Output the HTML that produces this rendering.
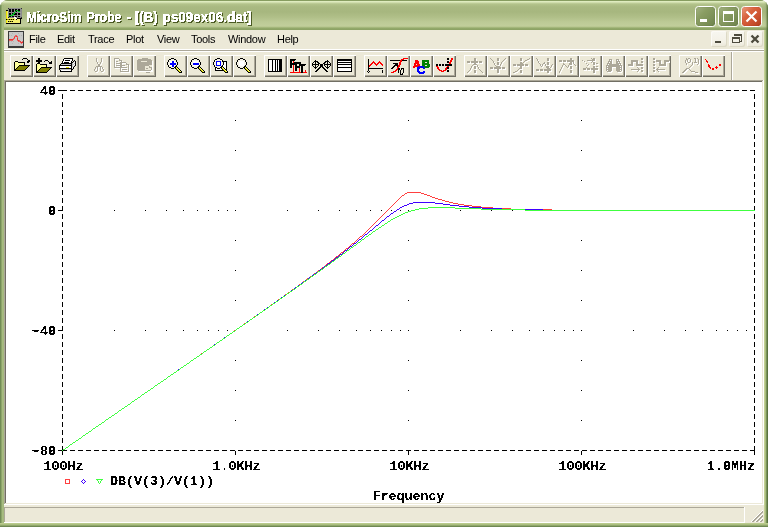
<!DOCTYPE html><html><head><meta charset="utf-8"><title>MicroSim Probe</title><style>
html,body{margin:0;padding:0;}
body{width:768px;height:527px;overflow:hidden;background:#fff;position:relative;font-family:"Liberation Sans",sans-serif;}
#win{position:absolute;left:0;top:0;width:768px;height:527px;border-radius:8px 8px 0 0;overflow:hidden;
 background:linear-gradient(to right,#728c56 0,#728c56 1px,#8da56a 1px,#8da56a 2px,#a6bb80 2px,#a6bb80 3px,#a5b87e 3px,#a5b87e 4px,#a4b880 4px,#a4b880 764px,#c6d398 764px,#c0ce92 765px,#b0c284 765px,#a5b97a 766px,#7f9860 766px,#728c55 767px,#5a7340 767px,#5a7340 768px);}
#title:before{content:"";position:absolute;left:0;top:0;width:3px;height:30px;background:linear-gradient(to right,rgba(90,120,60,.55) 0,rgba(90,120,60,.55) 1px,rgba(120,150,90,.2) 1px,rgba(120,150,90,0) 3px);}
#title:after{content:"";position:absolute;right:0;top:0;width:4px;height:30px;background:linear-gradient(to left,rgba(70,100,45,.75) 0,rgba(70,100,45,.75) 1px,rgba(90,120,60,.45) 1px,rgba(90,120,60,.45) 2px,rgba(110,140,80,.2) 2px,rgba(120,150,90,0) 4px);}
#lf{position:absolute;left:0;top:5px;width:4px;height:26px;background:linear-gradient(to right,#728c56 0,#728c56 1px,#8da56a 1px,#8da56a 2px,#a6bb80 2px,#a6bb80 3px,#a5b87e 3px,#a5b87e 4px);}
#bot{position:absolute;left:0;top:523px;width:768px;height:4px;background:linear-gradient(to bottom,#c0cf93 0,#b4c687 1px,#a2b777 2px,#7f9860 3px,#5f7845 4px);}
#title{position:absolute;left:0;top:0;width:768px;height:30px;
 background:linear-gradient(to bottom,#879d60 0,#879d60 1px,#e3efc4 1px,#dbe8ba 2px,#c5d3a0 3px,#b3c38b 4px,#a9b981 7px,#a7b77f 12px,#b0bf88 17px,#bccA96 22px,#c1ce9b 26px,#b3c38a 27px,#94aa6c 28px,#8aa163 30px);}
#ttext{position:absolute;left:26px;top:8px;font-weight:bold;font-size:13.2px;color:#fff;white-space:nowrap;text-shadow:1px 1px 0 #5f6f3c;letter-spacing:0px}
.cb{position:absolute;top:6px;width:19px;height:19px;border:1px solid #fff;border-radius:3.5px;background:linear-gradient(135deg,#a3b283 0,#8a9d63 35%,#7c9058 70%,#6d824b 100%);box-shadow:inset 0 0 1px 0 rgba(60,80,30,.6);}
.cb.x{background:linear-gradient(135deg,#eb9c80 0,#d9643f 35%,#cd5230 65%,#b03f1e 100%);box-shadow:inset 0 0 1px 0 rgba(120,30,10,.6);}
.mb{position:absolute;top:31px;width:16px;height:16px;border-radius:2px;background:linear-gradient(to bottom,#f7f6f0 0,#f3f1e6 70%,#e9e6d6 100%);box-shadow:inset -1px -1px 0 #dcd9c6,inset 1px 1px 0 #fbfaf6;}
#sep{position:absolute;left:731px;top:52px;width:1px;height:28px;background:#aca899;box-shadow:1px 0 0 #fff;}
#menubar{position:absolute;left:4px;top:30px;width:760px;height:19px;background:#ece9d8;}
.mi{position:absolute;top:33px;font-size:11px;color:#000;white-space:nowrap;line-height:13px;letter-spacing:-0.3px;will-change:transform;}
#tb{position:absolute;left:4px;top:49px;width:760px;height:33px;background:#ece9d8;box-shadow:inset 0 1px 0 #fff,inset 0 2px 0 #aca899,inset 0 3px 0 #fff;}
.btn{position:absolute;top:55px;width:23px;height:22px;background:#ece9d8;box-shadow:inset 1px 1px 0 #fff,inset -1px -1px 0 #716f64,inset -2px -2px 0 #aca899;}
#client{position:absolute;left:6px;top:82px;width:756px;height:421px;background:#fff;}
#status{position:absolute;left:4px;top:503px;width:760px;height:20px;background:#ece9d8;}
svg{position:absolute;left:0;top:0;}
.it{font-family:"Liberation Sans",sans-serif;font-weight:bold;stroke-width:0.5px;}
.t{font-family:"Liberation Mono",monospace;font-weight:bold;font-size:13.33px;fill:#000;stroke:#000;stroke-width:0.12px;}
</style></head><body>
<div id="win"><div id="title"></div><div id="lf"></div><div id="bot"></div></div>
<div id="menubar"></div>
<div class="mi" style="left:29px">File</div>
<div class="mi" style="left:57px">Edit</div>
<div class="mi" style="left:88px">Trace</div>
<div class="mi" style="left:126px">Plot</div>
<div class="mi" style="left:157px">View</div>
<div class="mi" style="left:191px">Tools</div>
<div class="mi" style="left:228px">Window</div>
<div class="mi" style="left:277px">Help</div>
<div id="tb"></div><div id="sep"></div>
<div class="cb" style="left:695px"></div><div class="cb" style="left:718px"></div><div class="cb x" style="left:741px"></div>
<div class="mb" style="left:711px"></div><div class="mb" style="left:729px"></div><div class="mb" style="left:747px"></div>
<svg width="768" height="527" viewBox="0 0 768 527" shape-rendering="crispEdges"><path d="M700 19h7v3h-7z" fill="#fff"/><path d="M723 11h11v11h-11zM724 14v7h9v-7z" fill="#fff" fill-rule="evenodd"/><path d="M746.5 11.5l10 10M756.5 11.5l-10 10" stroke="#fff" stroke-width="2.2" fill="none" shape-rendering="auto" stroke-linecap="butt"/><path d="M715 41h6v2h-6z" fill="#4d4b3e"/><path d="M734 34h8v8h-2v-1h1v-5h-7z" fill="#4d4b3e"/><path d="M732 37h8v6h-8zM733 39v3h6v-3z" fill="#4d4b3e" fill-rule="evenodd"/><path d="M751.5 35.5l7 7M758.5 35.5l-7 7" stroke="#4d4b3e" stroke-width="2.4" fill="none" shape-rendering="auto"/></svg>
<div class="btn" style="left:10px"></div>
<div class="btn" style="left:33px"></div>
<div class="btn" style="left:56px"></div>
<div class="btn" style="left:87px"></div>
<div class="btn" style="left:110px"></div>
<div class="btn" style="left:133px"></div>
<div class="btn" style="left:164px"></div>
<div class="btn" style="left:187px"></div>
<div class="btn" style="left:210px"></div>
<div class="btn" style="left:233px"></div>
<div class="btn" style="left:264px"></div>
<div class="btn" style="left:287px"></div>
<div class="btn" style="left:310px"></div>
<div class="btn" style="left:333px"></div>
<div class="btn" style="left:364px"></div>
<div class="btn" style="left:387px"></div>
<div class="btn" style="left:410px"></div>
<div class="btn" style="left:433px"></div>
<div class="btn" style="left:464px"></div>
<div class="btn" style="left:487px"></div>
<div class="btn" style="left:510px"></div>
<div class="btn" style="left:533px"></div>
<div class="btn" style="left:556px"></div>
<div class="btn" style="left:579px"></div>
<div class="btn" style="left:602px"></div>
<div class="btn" style="left:625px"></div>
<div class="btn" style="left:648px"></div>
<div class="btn" style="left:679px"></div>
<div class="btn" style="left:702px"></div>
<div id="client"></div><div id="status"></div>
<svg width="768" height="527" viewBox="0 0 768 527" shape-rendering="crispEdges"><rect x="4" y="80" width="760" height="1" fill="#aca899"/><rect x="5" y="81" width="758" height="1" fill="#716f64"/><rect x="4" y="80" width="1" height="424" fill="#aca899"/><rect x="5" y="81" width="1" height="422" fill="#716f64"/><rect x="762" y="81" width="1" height="423" fill="#ece9d8"/><rect x="763" y="80" width="1" height="425" fill="#fff"/><rect x="5" y="503" width="758" height="1" fill="#ece9d8"/><rect x="4" y="504" width="760" height="1" fill="#fff"/><rect x="4" y="507" width="740" height="1" fill="#aca899"/><rect x="4" y="507" width="1" height="15" fill="#aca899"/><rect x="744" y="507" width="1" height="16" fill="#fff"/><rect x="4" y="522" width="741" height="1" fill="#fff"/><path d="M762 510h1v1h-1zM761 511h1v1h-1zM760 512h1v1h-1zM759 513h1v1h-1zM758 514h1v1h-1zM757 515h1v1h-1zM756 516h1v1h-1zM755 517h1v1h-1zM754 518h1v1h-1zM753 519h1v1h-1zM752 520h1v1h-1zM751 521h1v1h-1zM762 514h1v1h-1zM761 515h1v1h-1zM760 516h1v1h-1zM759 517h1v1h-1zM758 518h1v1h-1zM757 519h1v1h-1zM756 520h1v1h-1zM755 521h1v1h-1zM762 518h1v1h-1zM761 519h1v1h-1zM760 520h1v1h-1zM759 521h1v1h-1z" fill="#fff"/><path d="M762 511h1v1h-1zM762 512h1v1h-1zM761 512h1v1h-1zM761 513h1v1h-1zM760 513h1v1h-1zM760 514h1v1h-1zM759 514h1v1h-1zM759 515h1v1h-1zM758 515h1v1h-1zM758 516h1v1h-1zM757 516h1v1h-1zM757 517h1v1h-1zM756 517h1v1h-1zM756 518h1v1h-1zM755 518h1v1h-1zM755 519h1v1h-1zM754 519h1v1h-1zM754 520h1v1h-1zM753 520h1v1h-1zM753 521h1v1h-1zM752 521h1v1h-1zM762 515h1v1h-1zM762 516h1v1h-1zM761 516h1v1h-1zM761 517h1v1h-1zM760 517h1v1h-1zM760 518h1v1h-1zM759 518h1v1h-1zM759 519h1v1h-1zM758 519h1v1h-1zM758 520h1v1h-1zM757 520h1v1h-1zM757 521h1v1h-1zM756 521h1v1h-1zM762 519h1v1h-1zM762 520h1v1h-1zM761 520h1v1h-1zM761 521h1v1h-1zM760 521h1v1h-1z" fill="#aca899"/></svg>
<svg width="768" height="527" viewBox="0 0 768 527" shape-rendering="crispEdges"><path d="M15 61H18V62H15zM14 62H15V63H14zM18 62H25V63H18zM14 63H15V64H14zM24 63H25V64H24zM14 64H15V65H14zM24 64H25V65H24zM14 65H15V66H14zM19 65H30V66H19zM14 66H15V67H14zM18 66H19V67H18zM28 66H29V67H28zM14 67H15V68H14zM17 67H18V68H17zM27 67H28V68H27zM14 68H15V69H14zM16 68H17V69H16zM26 68H27V69H26zM14 69H16V70H14zM25 69H26V70H25zM14 70H25V71H14z" fill="#000"/><path d="M15 62H18V63H15zM15 63H24V64H15zM15 64H24V65H15zM15 65H19V66H15zM15 66H18V67H15zM15 67H17V68H15zM15 68H16V69H15z" fill="#ffff9c"/><path d="M19 66H28V67H19zM18 67H27V68H18zM17 68H26V69H17zM16 69H25V70H16z" fill="#808000"/>
<path d="M22 59h1v1h-1zM23 58h1v1h-1zM23 58h1v1h-1zM24 58h1v1h-1zM25 58h1v1h-1zM26 58h1v1h-1zM26 58h1v1h-1zM27 59h1v1h-1zM28 60h1v1h-1zM28 60h1v1h-1zM28 61h1v1h-1zM28 62h1v1h-1zM27 61H30V62H27zM29 60h1v1h-1zM27 62h1v1h-1z" fill="#000"/>
<path d="M37 63H40V64H37zM36 64H37V65H36zM40 64H47V65H40zM36 65H37V66H36zM46 65H47V66H46zM36 66H37V67H36zM46 66H47V67H46zM36 67H37V68H36zM41 67H52V68H41zM36 68H37V69H36zM40 68H41V69H40zM50 68H51V69H50zM36 69H37V70H36zM39 69H40V70H39zM49 69H50V70H49zM36 70H37V71H36zM38 70H39V71H38zM48 70H49V71H48zM36 71H38V72H36zM47 71H48V72H47zM36 72H47V73H36z" fill="#000"/><path d="M37 64H40V65H37zM37 65H46V66H37zM37 66H46V67H37zM37 67H41V68H37zM37 68H40V69H37zM37 69H39V70H37zM37 70H38V71H37z" fill="#ffff9c"/><path d="M41 68H50V69H41zM40 69H49V70H40zM39 70H48V71H39zM38 71H47V72H38z" fill="#808000"/>
<path d="M36 60H42V62H36zM38 58H40V64H38z" fill="#000"/>
<path d="M44 61h1v1h-1zM45 60h1v1h-1zM45 60h1v1h-1zM46 60h1v1h-1zM47 60h1v1h-1zM47 60h1v1h-1zM48 61h1v1h-1zM49 62h1v1h-1zM49 62h1v1h-1zM50 63h1v1h-1zM49 63H52V64H49zM51 61h1v1h-1zM51 62h1v1h-1zM50 62h1v1h-1z" fill="#000"/>
<path d="M64 58H73V59H64zM63 59H64V60H63zM72 59H73V60H72zM63 60H64V61H63zM65 60H70V61H65zM72 60H73V61H72zM74 60H75V61H74zM62 61H63V62H62zM71 61H72V62H71zM73 61H74V62H73zM75 61H76V62H75zM62 62H63V63H62zM64 62H69V63H64zM71 62H73V63H71zM75 62H76V63H75zM61 63H72V64H61zM75 63H76V64H75zM60 64H61V65H60zM71 64H72V65H71zM75 64H76V65H75zM59 65H72V66H59zM75 65H76V66H75zM59 66H60V67H59zM71 66H72V67H71zM74 66H75V67H74zM59 67H60V68H59zM71 67H72V68H71zM73 67H74V68H73zM59 68H72V69H59zM73 68H74V69H73zM59 69H60V70H59zM71 69H73V70H71zM60 70H61V71H60zM71 70H72V71H71zM60 71H72V72H60z" fill="#000"/><path d="M64 59H72V60H64zM64 60H65V61H64zM70 60H72V61H70zM63 61H71V62H63zM63 62H64V63H63zM69 62H71V63H69zM74 62H75V63H74zM73 63H74V64H73zM74 64H75V65H74zM73 65H74V66H73zM60 66H71V67H60zM60 67H66V68H60zM69 67H71V68H69zM72 67H73V68H72zM61 70H71V71H61z" fill="#fff"/><path d="M74 61H75V62H74zM73 62H74V63H73zM72 63H73V64H72zM74 63H75V64H74zM61 64H71V65H61zM72 64H74V65H72zM72 65H73V66H72zM74 65H75V66H74zM72 66H74V67H72zM72 68H73V69H72zM60 69H71V70H60z" fill="#c0c0c0"/><path d="M66 67H69V68H66z" fill="#e8e000"/>
<path d="M96 58h1v1h-1zM96 59h1v1h-1zM96 60h1v1h-1zM96 61h1v1h-1zM96 61h1v1h-1zM97 62h1v1h-1zM97 63h1v1h-1zM98 64h1v1h-1zM98 64h1v1h-1zM98 65h1v1h-1zM98 66h1v1h-1zM101 58h1v1h-1zM101 59h1v1h-1zM101 60h1v1h-1zM101 61h1v1h-1zM101 61h1v1h-1zM100 62h1v1h-1zM100 63h1v1h-1zM99 64h1v1h-1zM99 64h1v1h-1zM99 65h1v1h-1zM99 66h1v1h-1zM97 66h1v1h-1zM96 66h1v1h-1zM95 67h1v1h-1zM95 67h1v1h-1zM95 68h1v1h-1zM94 69h1v1h-1zM94 69h1v1h-1zM94 70h1v1h-1zM95 71h1v1h-1zM95 71h1v1h-1zM96 71h1v1h-1zM97 70h1v1h-1zM97 70h1v1h-1zM97 69h1v1h-1zM97 68h1v1h-1zM97 67h1v1h-1zM100 66h1v1h-1zM101 66h1v1h-1zM102 67h1v1h-1zM102 67h1v1h-1zM102 68h1v1h-1zM103 69h1v1h-1zM103 69h1v1h-1zM103 70h1v1h-1zM102 71h1v1h-1zM102 71h1v1h-1zM101 71h1v1h-1zM100 70h1v1h-1zM100 70h1v1h-1zM100 69h1v1h-1zM100 68h1v1h-1zM100 67h1v1h-1z" fill="#fff" transform="translate(1 1)"/><path d="M96 58h1v1h-1zM96 59h1v1h-1zM96 60h1v1h-1zM96 61h1v1h-1zM96 61h1v1h-1zM97 62h1v1h-1zM97 63h1v1h-1zM98 64h1v1h-1zM98 64h1v1h-1zM98 65h1v1h-1zM98 66h1v1h-1zM101 58h1v1h-1zM101 59h1v1h-1zM101 60h1v1h-1zM101 61h1v1h-1zM101 61h1v1h-1zM100 62h1v1h-1zM100 63h1v1h-1zM99 64h1v1h-1zM99 64h1v1h-1zM99 65h1v1h-1zM99 66h1v1h-1zM97 66h1v1h-1zM96 66h1v1h-1zM95 67h1v1h-1zM95 67h1v1h-1zM95 68h1v1h-1zM94 69h1v1h-1zM94 69h1v1h-1zM94 70h1v1h-1zM95 71h1v1h-1zM95 71h1v1h-1zM96 71h1v1h-1zM97 70h1v1h-1zM97 70h1v1h-1zM97 69h1v1h-1zM97 68h1v1h-1zM97 67h1v1h-1zM100 66h1v1h-1zM101 66h1v1h-1zM102 67h1v1h-1zM102 67h1v1h-1zM102 68h1v1h-1zM103 69h1v1h-1zM103 69h1v1h-1zM103 70h1v1h-1zM102 71h1v1h-1zM102 71h1v1h-1zM101 71h1v1h-1zM100 70h1v1h-1zM100 70h1v1h-1zM100 69h1v1h-1zM100 68h1v1h-1zM100 67h1v1h-1z" fill="#aca899"/>
<path d="M114 58H119V59H114zM114 58H115V68H114zM114 67H122V68H114zM121 60H122V68H121zM119 59h1v1h-1zM120 60h1v1h-1zM119 60h1v1h-1zM116 61H118V62H116zM116 63H120V64H116zM116 65H120V66H116zM120 62H126V63H120zM120 62H121V72H120zM120 71H129V72H120zM128 64H129V72H128zM126 63h1v1h-1zM127 64h1v1h-1zM126 64h1v1h-1zM122 65H125V66H122zM122 67H127V68H122zM122 69H127V70H122z" fill="#fff" transform="translate(1 1)"/><path d="M114 58H119V59H114zM114 58H115V68H114zM114 67H122V68H114zM121 60H122V68H121zM119 59h1v1h-1zM120 60h1v1h-1zM119 60h1v1h-1zM116 61H118V62H116zM116 63H120V64H116zM116 65H120V66H116zM120 62H126V63H120zM120 62H121V72H120zM120 71H129V72H120zM128 64H129V72H128zM126 63h1v1h-1zM127 64h1v1h-1zM126 64h1v1h-1zM122 65H125V66H122zM122 67H127V68H122zM122 69H127V70H122z" fill="#aca899"/>
<path d="M137 60H152V70H137zM138 59H151V71H138zM142 58H148V59H142z" fill="#aca899"/><path d="M141 61H147V62H141z" fill="#ece9d8"/><path d="M144 65H152V71H144z" fill="#ece9d8"/><path d="M144 65H149V66H144zM144 65H145V71H144zM144 70H152V71H144zM151 67H152V71H151zM149 66h1v1h-1zM150 67h1v1h-1zM149 67h1v1h-1zM146 68H148V69H146zM146 70H150V71H146zM146 72H150V73H146z" fill="#aca899"/><path d="M152 61H153V71H152zM139 71H153V72H139zM151 70h1v1h-1z" fill="#fff"/>
<path d="M169 60H176V67H169zM171 59H174V68H171zM168 62H177V65H168z" fill="#f4f2e6"/><path d="M170 61H175V66H170z" fill="#fff"/><path d="M171 58h1v1h-1zM172 58h1v1h-1zM173 58h1v1h-1zM169 59h1v1h-1zM170 59h1v1h-1zM174 59h1v1h-1zM175 59h1v1h-1zM168 60h1v1h-1zM176 60h1v1h-1zM168 61h1v1h-1zM176 61h1v1h-1zM167 62h1v1h-1zM167 63h1v1h-1zM167 64h1v1h-1zM177 62h1v1h-1zM177 63h1v1h-1zM177 64h1v1h-1zM168 65h1v1h-1zM176 65h1v1h-1zM168 66h1v1h-1zM176 66h1v1h-1zM169 67h1v1h-1zM170 67h1v1h-1zM174 67h1v1h-1zM175 67h1v1h-1zM171 68h1v1h-1zM172 68h1v1h-1zM173 68h1v1h-1z" fill="#000"/><path d="M177 67h1v1h-1zM178 68h1v1h-1zM179 69h1v1h-1zM180 70h1v1h-1zM181 71h1v1h-1zM175 68h1v1h-1zM176 69h1v1h-1zM177 70h1v1h-1zM178 71h1v1h-1zM179 72h1v1h-1zM180 72h1v1h-1zM181 72h1v1h-1zM175 66h1v1h-1z" fill="#000"/><path d="M176 68h1v1h-1zM177 69h1v1h-1zM178 70h1v1h-1zM179 71h1v1h-1z" fill="#d0d000"/><path d="M176 67h1v1h-1zM177 68h1v1h-1zM178 69h1v1h-1zM179 70h1v1h-1zM180 71h1v1h-1z" fill="#ffff70"/>
<path d="M170 63H176V65H170zM172 61H174V67H172z" fill="#0000ff"/>
<path d="M192 60H199V67H192zM194 59H197V68H194zM191 62H200V65H191z" fill="#f4f2e6"/><path d="M193 61H198V66H193z" fill="#fff"/><path d="M194 58h1v1h-1zM195 58h1v1h-1zM196 58h1v1h-1zM192 59h1v1h-1zM193 59h1v1h-1zM197 59h1v1h-1zM198 59h1v1h-1zM191 60h1v1h-1zM199 60h1v1h-1zM191 61h1v1h-1zM199 61h1v1h-1zM190 62h1v1h-1zM190 63h1v1h-1zM190 64h1v1h-1zM200 62h1v1h-1zM200 63h1v1h-1zM200 64h1v1h-1zM191 65h1v1h-1zM199 65h1v1h-1zM191 66h1v1h-1zM199 66h1v1h-1zM192 67h1v1h-1zM193 67h1v1h-1zM197 67h1v1h-1zM198 67h1v1h-1zM194 68h1v1h-1zM195 68h1v1h-1zM196 68h1v1h-1z" fill="#000"/><path d="M200 67h1v1h-1zM201 68h1v1h-1zM202 69h1v1h-1zM203 70h1v1h-1zM204 71h1v1h-1zM198 68h1v1h-1zM199 69h1v1h-1zM200 70h1v1h-1zM201 71h1v1h-1zM202 72h1v1h-1zM203 72h1v1h-1zM204 72h1v1h-1zM198 66h1v1h-1z" fill="#000"/><path d="M199 68h1v1h-1zM200 69h1v1h-1zM201 70h1v1h-1zM202 71h1v1h-1z" fill="#d0d000"/><path d="M199 67h1v1h-1zM200 68h1v1h-1zM201 69h1v1h-1zM202 70h1v1h-1zM203 71h1v1h-1z" fill="#ffff70"/>
<path d="M193 63H199V65H193z" fill="#0000ff"/>
<path d="M222 61H227V62H222zM226 61H227V71H226zM215 70H227V71H215zM215 67H216V71H215z" fill="#000"/><path d="M216 67H226V70H216zM222 62H226V67H222z" fill="#fff"/>
<path d="M215 60H222V67H215zM217 59H220V68H217zM214 62H223V65H214z" fill="#f4f2e6"/><path d="M216 61H221V66H216z" fill="#fff"/><path d="M217 58h1v1h-1zM218 58h1v1h-1zM219 58h1v1h-1zM215 59h1v1h-1zM216 59h1v1h-1zM220 59h1v1h-1zM221 59h1v1h-1zM214 60h1v1h-1zM222 60h1v1h-1zM214 61h1v1h-1zM222 61h1v1h-1zM213 62h1v1h-1zM213 63h1v1h-1zM213 64h1v1h-1zM223 62h1v1h-1zM223 63h1v1h-1zM223 64h1v1h-1zM214 65h1v1h-1zM222 65h1v1h-1zM214 66h1v1h-1zM222 66h1v1h-1zM215 67h1v1h-1zM216 67h1v1h-1zM220 67h1v1h-1zM221 67h1v1h-1zM217 68h1v1h-1zM218 68h1v1h-1zM219 68h1v1h-1z" fill="#000"/><path d="M223 67h1v1h-1zM224 68h1v1h-1zM225 69h1v1h-1zM226 70h1v1h-1zM227 71h1v1h-1zM221 68h1v1h-1zM222 69h1v1h-1zM223 70h1v1h-1zM224 71h1v1h-1zM225 72h1v1h-1zM226 72h1v1h-1zM227 72h1v1h-1zM221 66h1v1h-1z" fill="#000"/><path d="M222 68h1v1h-1zM223 69h1v1h-1zM224 70h1v1h-1zM225 71h1v1h-1z" fill="#d0d000"/><path d="M222 67h1v1h-1zM223 68h1v1h-1zM224 69h1v1h-1zM225 70h1v1h-1zM226 71h1v1h-1z" fill="#ffff70"/>
<path d="M216 61H221V66H216z" fill="#0000ff"/><path d="M217 62H220V65H217z" fill="#fff"/>
<path d="M238 60H245V67H238zM240 59H243V68H240zM237 62H246V65H237z" fill="#f4f2e6"/><path d="M239 61H244V66H239z" fill="#fff"/><path d="M240 58h1v1h-1zM241 58h1v1h-1zM242 58h1v1h-1zM238 59h1v1h-1zM239 59h1v1h-1zM243 59h1v1h-1zM244 59h1v1h-1zM237 60h1v1h-1zM245 60h1v1h-1zM237 61h1v1h-1zM245 61h1v1h-1zM236 62h1v1h-1zM236 63h1v1h-1zM236 64h1v1h-1zM246 62h1v1h-1zM246 63h1v1h-1zM246 64h1v1h-1zM237 65h1v1h-1zM245 65h1v1h-1zM237 66h1v1h-1zM245 66h1v1h-1zM238 67h1v1h-1zM239 67h1v1h-1zM243 67h1v1h-1zM244 67h1v1h-1zM240 68h1v1h-1zM241 68h1v1h-1zM242 68h1v1h-1z" fill="#000"/><path d="M246 67h1v1h-1zM247 68h1v1h-1zM248 69h1v1h-1zM249 70h1v1h-1zM250 71h1v1h-1zM244 68h1v1h-1zM245 69h1v1h-1zM246 70h1v1h-1zM247 71h1v1h-1zM248 72h1v1h-1zM249 72h1v1h-1zM250 72h1v1h-1zM244 66h1v1h-1z" fill="#000"/><path d="M245 68h1v1h-1zM246 69h1v1h-1zM247 70h1v1h-1zM248 71h1v1h-1z" fill="#d0d000"/><path d="M245 67h1v1h-1zM246 68h1v1h-1zM247 69h1v1h-1zM248 70h1v1h-1zM249 71h1v1h-1z" fill="#ffff70"/>
<path d="M268 59H282V72H268z" fill="#000"/><path d="M269 60H272V71H269zM273 60H275V71H273zM276 60H277V71H276zM278 60H279V71H278z" fill="#fff"/>
<path d="M290 72H307V73H290zM293 61H294V73H293zM299 68H300V73H299zM305 70H306V73H305z" fill="#ff0000"/>
<path d="M312 63h1v1h-1zM312 64h1v1h-1zM312 65h1v1h-1zM313 62h1v1h-1zM313 64h1v1h-1zM313 66h1v1h-1zM314 61h1v1h-1zM314 64h1v1h-1zM314 67h1v1h-1zM315 60h1v1h-1zM315 61h1v1h-1zM315 62h1v1h-1zM315 63h1v1h-1zM315 64h1v1h-1zM315 65h1v1h-1zM315 66h1v1h-1zM315 67h1v1h-1zM315 68h1v1h-1zM315 71h1v1h-1zM316 61h1v1h-1zM316 64h1v1h-1zM316 67h1v1h-1zM316 70h1v1h-1zM316 71h1v1h-1zM317 61h1v1h-1zM317 62h1v1h-1zM317 64h1v1h-1zM317 66h1v1h-1zM317 69h1v1h-1zM317 70h1v1h-1zM318 62h1v1h-1zM318 63h1v1h-1zM318 64h1v1h-1zM318 65h1v1h-1zM318 68h1v1h-1zM318 69h1v1h-1zM319 63h1v1h-1zM319 67h1v1h-1zM319 68h1v1h-1zM320 64h1v1h-1zM320 65h1v1h-1zM320 66h1v1h-1zM320 67h1v1h-1zM321 64h1v1h-1zM321 65h1v1h-1zM321 66h1v1h-1zM322 64h1v1h-1zM322 65h1v1h-1zM322 66h1v1h-1zM322 67h1v1h-1zM323 63h1v1h-1zM323 67h1v1h-1zM323 68h1v1h-1zM324 62h1v1h-1zM324 63h1v1h-1zM324 64h1v1h-1zM324 65h1v1h-1zM324 68h1v1h-1zM324 69h1v1h-1zM325 61h1v1h-1zM325 62h1v1h-1zM325 64h1v1h-1zM325 66h1v1h-1zM325 69h1v1h-1zM325 70h1v1h-1zM326 61h1v1h-1zM326 64h1v1h-1zM326 67h1v1h-1zM326 70h1v1h-1zM326 71h1v1h-1zM327 60h1v1h-1zM327 61h1v1h-1zM327 62h1v1h-1zM327 63h1v1h-1zM327 64h1v1h-1zM327 65h1v1h-1zM327 66h1v1h-1zM327 67h1v1h-1zM327 68h1v1h-1zM327 71h1v1h-1zM328 61h1v1h-1zM328 64h1v1h-1zM328 67h1v1h-1zM329 62h1v1h-1zM329 64h1v1h-1zM329 66h1v1h-1zM330 63h1v1h-1zM330 64h1v1h-1zM330 65h1v1h-1z" fill="#000"/>
<path d="M337 59H352V72H337z" fill="#000"/><path d="M338 61H351V62H338zM338 63H351V64H338zM338 65H351V67H338zM338 68H351V71H338z" fill="#fff"/>
<path d="M368 59H369V70H368zM368 68H383V69H368zM382 70H383V73H382zM368 70h1v1h-1zM367 71h1v1h-1zM369 71h1v1h-1zM368 72h1v1h-1z" fill="#000"/>
<path d="M369 65h1v1h-1zM369 66h1v1h-1zM370 64h1v1h-1zM370 65h1v1h-1zM371 63h1v1h-1zM371 64h1v1h-1zM372 62h1v1h-1zM372 63h1v1h-1zM373 61h1v1h-1zM373 62h1v1h-1zM374 62h1v1h-1zM374 63h1v1h-1zM375 63h1v1h-1zM375 64h1v1h-1zM376 64h1v1h-1zM376 65h1v1h-1zM377 63h1v1h-1zM377 64h1v1h-1zM378 62h1v1h-1zM378 63h1v1h-1zM379 61h1v1h-1zM379 62h1v1h-1zM380 62h1v1h-1zM380 63h1v1h-1zM381 63h1v1h-1zM381 64h1v1h-1zM382 64h1v1h-1zM382 65h1v1h-1z" fill="#ff0000"/>
<path d="M390 60H407V61H390z" fill="#000"/>
<path d="M391 68h1v1h-1zM392 67h1v1h-1zM392 68h1v1h-1zM393 63h1v1h-1zM393 66h1v1h-1zM393 67h1v1h-1zM394 63h1v1h-1zM394 65h1v1h-1zM394 66h1v1h-1zM395 63h1v1h-1zM395 64h1v1h-1zM395 65h1v1h-1zM396 63h1v1h-1zM396 64h1v1h-1zM396 65h1v1h-1zM397 63h1v1h-1zM397 64h1v1h-1zM397 65h1v1h-1zM397 66h1v1h-1zM397 67h1v1h-1z" fill="#000"/>
<path d="M391 72h1v1h-1zM392 72h1v1h-1zM393 71h1v1h-1zM393 72h1v1h-1zM394 71h1v1h-1zM395 70h1v1h-1zM395 71h1v1h-1zM396 69h1v1h-1zM396 70h1v1h-1zM397 67h1v1h-1zM397 68h1v1h-1zM397 69h1v1h-1zM398 65h1v1h-1zM398 66h1v1h-1zM398 67h1v1h-1zM398 68h1v1h-1zM399 62h1v1h-1zM399 63h1v1h-1zM399 64h1v1h-1zM399 65h1v1h-1zM399 66h1v1h-1zM400 60h1v1h-1zM400 61h1v1h-1zM400 62h1v1h-1zM400 63h1v1h-1zM400 64h1v1h-1zM401 59h1v1h-1zM401 60h1v1h-1zM401 61h1v1h-1zM402 59h1v1h-1zM403 58h1v1h-1zM403 59h1v1h-1zM404 58h1v1h-1zM405 58h1v1h-1zM406 58h1v1h-1zM407 58h1v1h-1z" fill="#ff0000"/>
<path d="M436 66h1v1h-1zM437 67h1v1h-1zM437 68h1v1h-1zM438 69h1v1h-1zM438 69h1v1h-1zM439 70h1v1h-1zM440 70h1v1h-1zM441 71h1v1h-1zM441 71h1v1h-1zM442 71h1v1h-1zM443 70h1v1h-1zM444 70h1v1h-1zM444 70h1v1h-1zM445 69h1v1h-1zM445 68h1v1h-1zM446 67h1v1h-1zM447 66h1v1h-1zM447 66h1v1h-1zM448 65h1v1h-1zM448 64h1v1h-1zM449 63h1v1h-1zM449 62h1v1h-1zM450 61h1v1h-1zM450 61h1v1h-1zM450 60h1v1h-1zM451 59h1v1h-1zM451 58h1v1h-1zM437 66h1v1h-1zM438 67h1v1h-1zM438 68h1v1h-1zM439 69h1v1h-1zM439 69h1v1h-1zM440 70h1v1h-1zM441 70h1v1h-1zM442 71h1v1h-1zM442 71h1v1h-1zM443 71h1v1h-1zM444 70h1v1h-1zM445 70h1v1h-1zM445 70h1v1h-1zM446 69h1v1h-1zM446 68h1v1h-1zM447 67h1v1h-1zM448 66h1v1h-1zM448 66h1v1h-1zM449 65h1v1h-1zM449 64h1v1h-1zM450 63h1v1h-1zM450 62h1v1h-1zM451 61h1v1h-1zM451 61h1v1h-1zM451 60h1v1h-1zM452 59h1v1h-1zM452 58h1v1h-1z" fill="#ff0000"/>
<path d="M436 64h1v1h-1zM436 65h1v1h-1zM437 64h1v1h-1zM437 65h1v1h-1zM439 64h1v1h-1zM439 65h1v1h-1zM440 64h1v1h-1zM440 65h1v1h-1zM442 64h1v1h-1zM442 65h1v1h-1zM443 64h1v1h-1zM443 65h1v1h-1zM445 64h1v1h-1zM445 65h1v1h-1zM446 64h1v1h-1zM446 65h1v1h-1zM448 64h1v1h-1zM448 65h1v1h-1zM449 64h1v1h-1zM449 65h1v1h-1zM451 64h1v1h-1zM451 65h1v1h-1zM447 58h1v1h-1zM448 58h1v1h-1zM447 59h1v1h-1zM448 59h1v1h-1zM447 61h1v1h-1zM448 61h1v1h-1zM447 62h1v1h-1zM448 62h1v1h-1zM447 64h1v1h-1zM448 64h1v1h-1zM447 65h1v1h-1zM448 65h1v1h-1zM447 67h1v1h-1zM448 67h1v1h-1zM447 68h1v1h-1zM448 68h1v1h-1zM447 70h1v1h-1zM448 70h1v1h-1zM447 71h1v1h-1zM448 71h1v1h-1zM445 64h1v1h-1zM445 65h1v1h-1zM446 64h1v1h-1zM446 65h1v1h-1zM447 64h1v1h-1zM447 65h1v1h-1zM448 64h1v1h-1zM448 65h1v1h-1zM449 64h1v1h-1zM449 65h1v1h-1zM450 64h1v1h-1zM450 65h1v1h-1z" fill="#000"/>
<path d="M467 72h1v1h-1zM468 71h1v1h-1zM469 70h1v1h-1zM470 69h1v1h-1zM470 69h1v1h-1zM470 68h1v1h-1zM471 67h1v1h-1zM471 66h1v1h-1zM472 65h1v1h-1zM472 65h1v1h-1zM473 64h1v1h-1zM474 63h1v1h-1zM474 63h1v1h-1zM475 63h1v1h-1zM475 63h1v1h-1zM476 64h1v1h-1zM477 65h1v1h-1zM477 65h1v1h-1zM477 66h1v1h-1zM478 67h1v1h-1zM478 68h1v1h-1zM479 69h1v1h-1zM479 69h1v1h-1zM480 70h1v1h-1zM481 71h1v1h-1zM482 72h1v1h-1zM467 61h1v1h-1zM467 62h1v1h-1zM468 61h1v1h-1zM468 62h1v1h-1zM469 61h1v1h-1zM469 62h1v1h-1zM471 61h1v1h-1zM471 62h1v1h-1zM472 61h1v1h-1zM472 62h1v1h-1zM473 61h1v1h-1zM473 62h1v1h-1zM474 58h1v1h-1zM474 59h1v1h-1zM474 60h1v1h-1zM474 61h1v1h-1zM474 62h1v1h-1zM474 63h1v1h-1zM474 64h1v1h-1zM474 66h1v1h-1zM474 67h1v1h-1zM474 68h1v1h-1zM474 70h1v1h-1zM474 71h1v1h-1zM474 72h1v1h-1zM475 58h1v1h-1zM475 59h1v1h-1zM475 60h1v1h-1zM475 61h1v1h-1zM475 62h1v1h-1zM475 63h1v1h-1zM475 64h1v1h-1zM475 66h1v1h-1zM475 67h1v1h-1zM475 68h1v1h-1zM475 70h1v1h-1zM475 71h1v1h-1zM475 72h1v1h-1zM476 61h1v1h-1zM476 62h1v1h-1zM477 61h1v1h-1zM477 62h1v1h-1zM479 61h1v1h-1zM479 62h1v1h-1zM480 61h1v1h-1zM480 62h1v1h-1zM481 61h1v1h-1zM481 62h1v1h-1z" fill="#fff" transform="translate(1 1)"/><path d="M467 72h1v1h-1zM468 71h1v1h-1zM469 70h1v1h-1zM470 69h1v1h-1zM470 69h1v1h-1zM470 68h1v1h-1zM471 67h1v1h-1zM471 66h1v1h-1zM472 65h1v1h-1zM472 65h1v1h-1zM473 64h1v1h-1zM474 63h1v1h-1zM474 63h1v1h-1zM475 63h1v1h-1zM475 63h1v1h-1zM476 64h1v1h-1zM477 65h1v1h-1zM477 65h1v1h-1zM477 66h1v1h-1zM478 67h1v1h-1zM478 68h1v1h-1zM479 69h1v1h-1zM479 69h1v1h-1zM480 70h1v1h-1zM481 71h1v1h-1zM482 72h1v1h-1zM467 61h1v1h-1zM467 62h1v1h-1zM468 61h1v1h-1zM468 62h1v1h-1zM469 61h1v1h-1zM469 62h1v1h-1zM471 61h1v1h-1zM471 62h1v1h-1zM472 61h1v1h-1zM472 62h1v1h-1zM473 61h1v1h-1zM473 62h1v1h-1zM474 58h1v1h-1zM474 59h1v1h-1zM474 60h1v1h-1zM474 61h1v1h-1zM474 62h1v1h-1zM474 63h1v1h-1zM474 64h1v1h-1zM474 66h1v1h-1zM474 67h1v1h-1zM474 68h1v1h-1zM474 70h1v1h-1zM474 71h1v1h-1zM474 72h1v1h-1zM475 58h1v1h-1zM475 59h1v1h-1zM475 60h1v1h-1zM475 61h1v1h-1zM475 62h1v1h-1zM475 63h1v1h-1zM475 64h1v1h-1zM475 66h1v1h-1zM475 67h1v1h-1zM475 68h1v1h-1zM475 70h1v1h-1zM475 71h1v1h-1zM475 72h1v1h-1zM476 61h1v1h-1zM476 62h1v1h-1zM477 61h1v1h-1zM477 62h1v1h-1zM479 61h1v1h-1zM479 62h1v1h-1zM480 61h1v1h-1zM480 62h1v1h-1zM481 61h1v1h-1zM481 62h1v1h-1z" fill="#aca899"/>
<path d="M490 58h1v1h-1zM491 59h1v1h-1zM492 60h1v1h-1zM493 61h1v1h-1zM493 61h1v1h-1zM493 62h1v1h-1zM494 63h1v1h-1zM494 64h1v1h-1zM495 65h1v1h-1zM495 65h1v1h-1zM496 66h1v1h-1zM497 67h1v1h-1zM497 67h1v1h-1zM498 67h1v1h-1zM498 67h1v1h-1zM499 66h1v1h-1zM500 65h1v1h-1zM500 65h1v1h-1zM500 64h1v1h-1zM501 63h1v1h-1zM501 62h1v1h-1zM502 61h1v1h-1zM502 61h1v1h-1zM503 60h1v1h-1zM504 59h1v1h-1zM505 58h1v1h-1zM490 67h1v1h-1zM490 68h1v1h-1zM491 67h1v1h-1zM491 68h1v1h-1zM492 67h1v1h-1zM492 68h1v1h-1zM494 67h1v1h-1zM494 68h1v1h-1zM495 67h1v1h-1zM495 68h1v1h-1zM496 67h1v1h-1zM496 68h1v1h-1zM497 58h1v1h-1zM497 59h1v1h-1zM497 60h1v1h-1zM497 62h1v1h-1zM497 63h1v1h-1zM497 64h1v1h-1zM497 66h1v1h-1zM497 67h1v1h-1zM497 68h1v1h-1zM497 69h1v1h-1zM497 70h1v1h-1zM497 71h1v1h-1zM497 72h1v1h-1zM498 58h1v1h-1zM498 59h1v1h-1zM498 60h1v1h-1zM498 62h1v1h-1zM498 63h1v1h-1zM498 64h1v1h-1zM498 66h1v1h-1zM498 67h1v1h-1zM498 68h1v1h-1zM498 69h1v1h-1zM498 70h1v1h-1zM498 71h1v1h-1zM498 72h1v1h-1zM499 67h1v1h-1zM499 68h1v1h-1zM500 67h1v1h-1zM500 68h1v1h-1zM502 67h1v1h-1zM502 68h1v1h-1zM503 67h1v1h-1zM503 68h1v1h-1zM504 67h1v1h-1zM504 68h1v1h-1z" fill="#fff" transform="translate(1 1)"/><path d="M490 58h1v1h-1zM491 59h1v1h-1zM492 60h1v1h-1zM493 61h1v1h-1zM493 61h1v1h-1zM493 62h1v1h-1zM494 63h1v1h-1zM494 64h1v1h-1zM495 65h1v1h-1zM495 65h1v1h-1zM496 66h1v1h-1zM497 67h1v1h-1zM497 67h1v1h-1zM498 67h1v1h-1zM498 67h1v1h-1zM499 66h1v1h-1zM500 65h1v1h-1zM500 65h1v1h-1zM500 64h1v1h-1zM501 63h1v1h-1zM501 62h1v1h-1zM502 61h1v1h-1zM502 61h1v1h-1zM503 60h1v1h-1zM504 59h1v1h-1zM505 58h1v1h-1zM490 67h1v1h-1zM490 68h1v1h-1zM491 67h1v1h-1zM491 68h1v1h-1zM492 67h1v1h-1zM492 68h1v1h-1zM494 67h1v1h-1zM494 68h1v1h-1zM495 67h1v1h-1zM495 68h1v1h-1zM496 67h1v1h-1zM496 68h1v1h-1zM497 58h1v1h-1zM497 59h1v1h-1zM497 60h1v1h-1zM497 62h1v1h-1zM497 63h1v1h-1zM497 64h1v1h-1zM497 66h1v1h-1zM497 67h1v1h-1zM497 68h1v1h-1zM497 69h1v1h-1zM497 70h1v1h-1zM497 71h1v1h-1zM497 72h1v1h-1zM498 58h1v1h-1zM498 59h1v1h-1zM498 60h1v1h-1zM498 62h1v1h-1zM498 63h1v1h-1zM498 64h1v1h-1zM498 66h1v1h-1zM498 67h1v1h-1zM498 68h1v1h-1zM498 69h1v1h-1zM498 70h1v1h-1zM498 71h1v1h-1zM498 72h1v1h-1zM499 67h1v1h-1zM499 68h1v1h-1zM500 67h1v1h-1zM500 68h1v1h-1zM502 67h1v1h-1zM502 68h1v1h-1zM503 67h1v1h-1zM503 68h1v1h-1zM504 67h1v1h-1zM504 68h1v1h-1z" fill="#aca899"/>
<path d="M513 72h1v1h-1zM514 72h1v1h-1zM515 71h1v1h-1zM516 71h1v1h-1zM517 70h1v1h-1zM517 70h1v1h-1zM518 69h1v1h-1zM519 68h1v1h-1zM520 67h1v1h-1zM520 67h1v1h-1zM520 66h1v1h-1zM521 65h1v1h-1zM521 64h1v1h-1zM522 63h1v1h-1zM522 63h1v1h-1zM523 62h1v1h-1zM524 61h1v1h-1zM525 60h1v1h-1zM525 60h1v1h-1zM526 60h1v1h-1zM527 59h1v1h-1zM528 59h1v1h-1zM529 58h1v1h-1zM513 64h1v1h-1zM513 65h1v1h-1zM514 64h1v1h-1zM514 65h1v1h-1zM515 64h1v1h-1zM515 65h1v1h-1zM517 64h1v1h-1zM517 65h1v1h-1zM518 64h1v1h-1zM518 65h1v1h-1zM519 64h1v1h-1zM519 65h1v1h-1zM520 58h1v1h-1zM520 59h1v1h-1zM520 60h1v1h-1zM520 62h1v1h-1zM520 63h1v1h-1zM520 64h1v1h-1zM520 65h1v1h-1zM520 66h1v1h-1zM520 67h1v1h-1zM520 68h1v1h-1zM520 70h1v1h-1zM520 71h1v1h-1zM520 72h1v1h-1zM521 58h1v1h-1zM521 59h1v1h-1zM521 60h1v1h-1zM521 62h1v1h-1zM521 63h1v1h-1zM521 64h1v1h-1zM521 65h1v1h-1zM521 66h1v1h-1zM521 67h1v1h-1zM521 68h1v1h-1zM521 70h1v1h-1zM521 71h1v1h-1zM521 72h1v1h-1zM522 64h1v1h-1zM522 65h1v1h-1zM523 64h1v1h-1zM523 65h1v1h-1zM525 64h1v1h-1zM525 65h1v1h-1zM526 64h1v1h-1zM526 65h1v1h-1zM527 64h1v1h-1zM527 65h1v1h-1z" fill="#fff" transform="translate(1 1)"/><path d="M513 72h1v1h-1zM514 72h1v1h-1zM515 71h1v1h-1zM516 71h1v1h-1zM517 70h1v1h-1zM517 70h1v1h-1zM518 69h1v1h-1zM519 68h1v1h-1zM520 67h1v1h-1zM520 67h1v1h-1zM520 66h1v1h-1zM521 65h1v1h-1zM521 64h1v1h-1zM522 63h1v1h-1zM522 63h1v1h-1zM523 62h1v1h-1zM524 61h1v1h-1zM525 60h1v1h-1zM525 60h1v1h-1zM526 60h1v1h-1zM527 59h1v1h-1zM528 59h1v1h-1zM529 58h1v1h-1zM513 64h1v1h-1zM513 65h1v1h-1zM514 64h1v1h-1zM514 65h1v1h-1zM515 64h1v1h-1zM515 65h1v1h-1zM517 64h1v1h-1zM517 65h1v1h-1zM518 64h1v1h-1zM518 65h1v1h-1zM519 64h1v1h-1zM519 65h1v1h-1zM520 58h1v1h-1zM520 59h1v1h-1zM520 60h1v1h-1zM520 62h1v1h-1zM520 63h1v1h-1zM520 64h1v1h-1zM520 65h1v1h-1zM520 66h1v1h-1zM520 67h1v1h-1zM520 68h1v1h-1zM520 70h1v1h-1zM520 71h1v1h-1zM520 72h1v1h-1zM521 58h1v1h-1zM521 59h1v1h-1zM521 60h1v1h-1zM521 62h1v1h-1zM521 63h1v1h-1zM521 64h1v1h-1zM521 65h1v1h-1zM521 66h1v1h-1zM521 67h1v1h-1zM521 68h1v1h-1zM521 70h1v1h-1zM521 71h1v1h-1zM521 72h1v1h-1zM522 64h1v1h-1zM522 65h1v1h-1zM523 64h1v1h-1zM523 65h1v1h-1zM525 64h1v1h-1zM525 65h1v1h-1zM526 64h1v1h-1zM526 65h1v1h-1zM527 64h1v1h-1zM527 65h1v1h-1z" fill="#aca899"/>
<path d="M536 58h1v1h-1zM537 59h1v1h-1zM537 60h1v1h-1zM538 61h1v1h-1zM538 62h1v1h-1zM539 63h1v1h-1zM540 64h1v1h-1zM540 65h1v1h-1zM541 66h1v1h-1zM541 66h1v1h-1zM542 65h1v1h-1zM542 64h1v1h-1zM543 63h1v1h-1zM544 62h1v1h-1zM544 62h1v1h-1zM544 63h1v1h-1zM545 64h1v1h-1zM545 65h1v1h-1zM546 66h1v1h-1zM546 67h1v1h-1zM547 68h1v1h-1zM547 69h1v1h-1zM548 70h1v1h-1zM548 70h1v1h-1zM549 69h1v1h-1zM549 68h1v1h-1zM550 67h1v1h-1zM551 66h1v1h-1zM551 65h1v1h-1zM552 64h1v1h-1zM536 69h1v1h-1zM536 70h1v1h-1zM537 69h1v1h-1zM537 70h1v1h-1zM538 69h1v1h-1zM538 70h1v1h-1zM540 69h1v1h-1zM540 70h1v1h-1zM541 69h1v1h-1zM541 70h1v1h-1zM542 69h1v1h-1zM542 70h1v1h-1zM544 69h1v1h-1zM544 70h1v1h-1zM545 69h1v1h-1zM545 70h1v1h-1zM546 69h1v1h-1zM546 70h1v1h-1zM547 58h1v1h-1zM547 59h1v1h-1zM547 60h1v1h-1zM547 62h1v1h-1zM547 63h1v1h-1zM547 64h1v1h-1zM547 66h1v1h-1zM547 67h1v1h-1zM547 68h1v1h-1zM547 69h1v1h-1zM547 70h1v1h-1zM547 71h1v1h-1zM547 72h1v1h-1zM548 58h1v1h-1zM548 59h1v1h-1zM548 60h1v1h-1zM548 62h1v1h-1zM548 63h1v1h-1zM548 64h1v1h-1zM548 66h1v1h-1zM548 67h1v1h-1zM548 68h1v1h-1zM548 69h1v1h-1zM548 70h1v1h-1zM548 71h1v1h-1zM548 72h1v1h-1zM549 69h1v1h-1zM549 70h1v1h-1zM550 69h1v1h-1zM550 70h1v1h-1z" fill="#fff" transform="translate(1 1)"/><path d="M536 58h1v1h-1zM537 59h1v1h-1zM537 60h1v1h-1zM538 61h1v1h-1zM538 62h1v1h-1zM539 63h1v1h-1zM540 64h1v1h-1zM540 65h1v1h-1zM541 66h1v1h-1zM541 66h1v1h-1zM542 65h1v1h-1zM542 64h1v1h-1zM543 63h1v1h-1zM544 62h1v1h-1zM544 62h1v1h-1zM544 63h1v1h-1zM545 64h1v1h-1zM545 65h1v1h-1zM546 66h1v1h-1zM546 67h1v1h-1zM547 68h1v1h-1zM547 69h1v1h-1zM548 70h1v1h-1zM548 70h1v1h-1zM549 69h1v1h-1zM549 68h1v1h-1zM550 67h1v1h-1zM551 66h1v1h-1zM551 65h1v1h-1zM552 64h1v1h-1zM536 69h1v1h-1zM536 70h1v1h-1zM537 69h1v1h-1zM537 70h1v1h-1zM538 69h1v1h-1zM538 70h1v1h-1zM540 69h1v1h-1zM540 70h1v1h-1zM541 69h1v1h-1zM541 70h1v1h-1zM542 69h1v1h-1zM542 70h1v1h-1zM544 69h1v1h-1zM544 70h1v1h-1zM545 69h1v1h-1zM545 70h1v1h-1zM546 69h1v1h-1zM546 70h1v1h-1zM547 58h1v1h-1zM547 59h1v1h-1zM547 60h1v1h-1zM547 62h1v1h-1zM547 63h1v1h-1zM547 64h1v1h-1zM547 66h1v1h-1zM547 67h1v1h-1zM547 68h1v1h-1zM547 69h1v1h-1zM547 70h1v1h-1zM547 71h1v1h-1zM547 72h1v1h-1zM548 58h1v1h-1zM548 59h1v1h-1zM548 60h1v1h-1zM548 62h1v1h-1zM548 63h1v1h-1zM548 64h1v1h-1zM548 66h1v1h-1zM548 67h1v1h-1zM548 68h1v1h-1zM548 69h1v1h-1zM548 70h1v1h-1zM548 71h1v1h-1zM548 72h1v1h-1zM549 69h1v1h-1zM549 70h1v1h-1zM550 69h1v1h-1zM550 70h1v1h-1z" fill="#aca899"/>
<path d="M559 72h1v1h-1zM559 71h1v1h-1zM560 70h1v1h-1zM560 69h1v1h-1zM561 68h1v1h-1zM561 67h1v1h-1zM562 66h1v1h-1zM562 65h1v1h-1zM563 64h1v1h-1zM563 63h1v1h-1zM563 63h1v1h-1zM564 64h1v1h-1zM565 65h1v1h-1zM566 66h1v1h-1zM567 67h1v1h-1zM567 67h1v1h-1zM568 66h1v1h-1zM568 65h1v1h-1zM569 64h1v1h-1zM569 63h1v1h-1zM570 62h1v1h-1zM570 61h1v1h-1zM571 60h1v1h-1zM571 60h1v1h-1zM572 61h1v1h-1zM573 62h1v1h-1zM573 63h1v1h-1zM574 64h1v1h-1zM575 65h1v1h-1zM559 60h1v1h-1zM559 61h1v1h-1zM560 60h1v1h-1zM560 61h1v1h-1zM561 60h1v1h-1zM561 61h1v1h-1zM563 60h1v1h-1zM563 61h1v1h-1zM564 60h1v1h-1zM564 61h1v1h-1zM565 60h1v1h-1zM565 61h1v1h-1zM567 60h1v1h-1zM567 61h1v1h-1zM568 60h1v1h-1zM568 61h1v1h-1zM569 60h1v1h-1zM569 61h1v1h-1zM570 58h1v1h-1zM570 59h1v1h-1zM570 60h1v1h-1zM570 61h1v1h-1zM570 62h1v1h-1zM570 63h1v1h-1zM570 64h1v1h-1zM570 66h1v1h-1zM570 67h1v1h-1zM570 68h1v1h-1zM570 70h1v1h-1zM570 71h1v1h-1zM570 72h1v1h-1zM571 58h1v1h-1zM571 59h1v1h-1zM571 60h1v1h-1zM571 61h1v1h-1zM571 62h1v1h-1zM571 63h1v1h-1zM571 64h1v1h-1zM571 66h1v1h-1zM571 67h1v1h-1zM571 68h1v1h-1zM571 70h1v1h-1zM571 71h1v1h-1zM571 72h1v1h-1zM572 60h1v1h-1zM572 61h1v1h-1zM573 60h1v1h-1zM573 61h1v1h-1z" fill="#fff" transform="translate(1 1)"/><path d="M559 72h1v1h-1zM559 71h1v1h-1zM560 70h1v1h-1zM560 69h1v1h-1zM561 68h1v1h-1zM561 67h1v1h-1zM562 66h1v1h-1zM562 65h1v1h-1zM563 64h1v1h-1zM563 63h1v1h-1zM563 63h1v1h-1zM564 64h1v1h-1zM565 65h1v1h-1zM566 66h1v1h-1zM567 67h1v1h-1zM567 67h1v1h-1zM568 66h1v1h-1zM568 65h1v1h-1zM569 64h1v1h-1zM569 63h1v1h-1zM570 62h1v1h-1zM570 61h1v1h-1zM571 60h1v1h-1zM571 60h1v1h-1zM572 61h1v1h-1zM573 62h1v1h-1zM573 63h1v1h-1zM574 64h1v1h-1zM575 65h1v1h-1zM559 60h1v1h-1zM559 61h1v1h-1zM560 60h1v1h-1zM560 61h1v1h-1zM561 60h1v1h-1zM561 61h1v1h-1zM563 60h1v1h-1zM563 61h1v1h-1zM564 60h1v1h-1zM564 61h1v1h-1zM565 60h1v1h-1zM565 61h1v1h-1zM567 60h1v1h-1zM567 61h1v1h-1zM568 60h1v1h-1zM568 61h1v1h-1zM569 60h1v1h-1zM569 61h1v1h-1zM570 58h1v1h-1zM570 59h1v1h-1zM570 60h1v1h-1zM570 61h1v1h-1zM570 62h1v1h-1zM570 63h1v1h-1zM570 64h1v1h-1zM570 66h1v1h-1zM570 67h1v1h-1zM570 68h1v1h-1zM570 70h1v1h-1zM570 71h1v1h-1zM570 72h1v1h-1zM571 58h1v1h-1zM571 59h1v1h-1zM571 60h1v1h-1zM571 61h1v1h-1zM571 62h1v1h-1zM571 63h1v1h-1zM571 64h1v1h-1zM571 66h1v1h-1zM571 67h1v1h-1zM571 68h1v1h-1zM571 70h1v1h-1zM571 71h1v1h-1zM571 72h1v1h-1zM572 60h1v1h-1zM572 61h1v1h-1zM573 60h1v1h-1zM573 61h1v1h-1z" fill="#aca899"/>
<path d="M582 60h1v1h-1zM584 61h1v1h-1zM586 63h1v1h-1zM588 64h1v1h-1zM587 65h1v1h-1zM586 67h1v1h-1zM584 69h1v1h-1zM587 60h1v1h-1zM588 60h1v1h-1zM589 60h1v1h-1zM590 60h1v1h-1zM591 60h1v1h-1zM592 60h1v1h-1zM593 60h1v1h-1zM592 59h1v1h-1zM592 61h1v1h-1zM591 58h1v1h-1zM591 62h1v1h-1zM583 68h1v1h-1zM583 69h1v1h-1zM584 68h1v1h-1zM584 69h1v1h-1zM585 68h1v1h-1zM585 69h1v1h-1zM587 68h1v1h-1zM587 69h1v1h-1zM588 68h1v1h-1zM588 69h1v1h-1zM589 68h1v1h-1zM589 69h1v1h-1zM591 68h1v1h-1zM591 69h1v1h-1zM592 68h1v1h-1zM592 69h1v1h-1zM593 58h1v1h-1zM593 59h1v1h-1zM593 60h1v1h-1zM593 62h1v1h-1zM593 63h1v1h-1zM593 64h1v1h-1zM593 66h1v1h-1zM593 67h1v1h-1zM593 68h1v1h-1zM593 69h1v1h-1zM593 70h1v1h-1zM593 71h1v1h-1zM593 72h1v1h-1zM594 58h1v1h-1zM594 59h1v1h-1zM594 60h1v1h-1zM594 62h1v1h-1zM594 63h1v1h-1zM594 64h1v1h-1zM594 66h1v1h-1zM594 67h1v1h-1zM594 68h1v1h-1zM594 69h1v1h-1zM594 70h1v1h-1zM594 71h1v1h-1zM594 72h1v1h-1zM595 68h1v1h-1zM595 69h1v1h-1zM596 68h1v1h-1zM596 69h1v1h-1zM597 68h1v1h-1zM597 69h1v1h-1zM596 63h1v1h-1zM597 63h1v1h-1zM596 66h1v1h-1zM597 66h1v1h-1z" fill="#fff" transform="translate(1 1)"/><path d="M582 60h1v1h-1zM584 61h1v1h-1zM586 63h1v1h-1zM588 64h1v1h-1zM587 65h1v1h-1zM586 67h1v1h-1zM584 69h1v1h-1zM587 60h1v1h-1zM588 60h1v1h-1zM589 60h1v1h-1zM590 60h1v1h-1zM591 60h1v1h-1zM592 60h1v1h-1zM593 60h1v1h-1zM592 59h1v1h-1zM592 61h1v1h-1zM591 58h1v1h-1zM591 62h1v1h-1zM583 68h1v1h-1zM583 69h1v1h-1zM584 68h1v1h-1zM584 69h1v1h-1zM585 68h1v1h-1zM585 69h1v1h-1zM587 68h1v1h-1zM587 69h1v1h-1zM588 68h1v1h-1zM588 69h1v1h-1zM589 68h1v1h-1zM589 69h1v1h-1zM591 68h1v1h-1zM591 69h1v1h-1zM592 68h1v1h-1zM592 69h1v1h-1zM593 58h1v1h-1zM593 59h1v1h-1zM593 60h1v1h-1zM593 62h1v1h-1zM593 63h1v1h-1zM593 64h1v1h-1zM593 66h1v1h-1zM593 67h1v1h-1zM593 68h1v1h-1zM593 69h1v1h-1zM593 70h1v1h-1zM593 71h1v1h-1zM593 72h1v1h-1zM594 58h1v1h-1zM594 59h1v1h-1zM594 60h1v1h-1zM594 62h1v1h-1zM594 63h1v1h-1zM594 64h1v1h-1zM594 66h1v1h-1zM594 67h1v1h-1zM594 68h1v1h-1zM594 69h1v1h-1zM594 70h1v1h-1zM594 71h1v1h-1zM594 72h1v1h-1zM595 68h1v1h-1zM595 69h1v1h-1zM596 68h1v1h-1zM596 69h1v1h-1zM597 68h1v1h-1zM597 69h1v1h-1zM596 63h1v1h-1zM597 63h1v1h-1zM596 66h1v1h-1zM597 66h1v1h-1z" fill="#aca899"/>
<g transform="translate(1 1)"><path d="M609 59H612V60H609zM616 59H619V60H616zM609 60H610V61H609zM611 60H612V61H611zM616 60H617V61H616zM618 60H619V61H618zM608 61H612V62H608zM616 61H620V62H616zM608 62H609V63H608zM610 62H612V63H610zM616 62H618V63H616zM619 62H620V63H619zM607 63H612V64H607zM616 63H621V64H616zM607 64H608V65H607zM609 64H619V65H609zM620 64H621V65H620zM606 65H622V66H606zM606 66H607V67H606zM608 66H620V67H608zM621 66H622V67H621zM606 67H612V68H606zM616 67H622V68H616zM606 68H607V69H606zM608 68H612V69H608zM616 68H620V69H616zM621 68H622V69H621zM606 69H612V70H606zM616 69H622V70H616zM606 70H607V71H606zM608 70H612V71H608zM616 70H620V71H616zM621 70H622V71H621zM607 71H611V72H607zM617 71H621V72H617z" fill="#fff"/></g><path d="M609 59H612V60H609zM616 59H619V60H616zM609 60H610V61H609zM611 60H612V61H611zM616 60H617V61H616zM618 60H619V61H618zM608 61H612V62H608zM616 61H620V62H616zM608 62H609V63H608zM610 62H612V63H610zM616 62H618V63H616zM619 62H620V63H619zM607 63H612V64H607zM616 63H621V64H616zM607 64H608V65H607zM609 64H619V65H609zM620 64H621V65H620zM606 65H622V66H606zM606 66H607V67H606zM608 66H620V67H608zM621 66H622V67H621zM606 67H612V68H606zM616 67H622V68H616zM606 68H607V69H606zM608 68H612V69H608zM616 68H620V69H616zM621 68H622V69H621zM606 69H612V70H606zM616 69H622V70H616zM606 70H607V71H606zM608 70H612V71H608zM616 70H620V71H616zM621 70H622V71H621zM607 71H611V72H607zM617 71H621V72H617z" fill="#aca899"/>
<path d="M628 64h1v1h-1zM628 65h1v1h-1zM629 64h1v1h-1zM629 65h1v1h-1zM630 64h1v1h-1zM630 65h1v1h-1zM631 60h1v1h-1zM631 61h1v1h-1zM631 62h1v1h-1zM631 63h1v1h-1zM631 64h1v1h-1zM631 65h1v1h-1zM631 69h1v1h-1zM632 60h1v1h-1zM632 61h1v1h-1zM632 62h1v1h-1zM632 63h1v1h-1zM632 64h1v1h-1zM632 65h1v1h-1zM632 69h1v1h-1zM633 60h1v1h-1zM633 61h1v1h-1zM633 69h1v1h-1zM634 60h1v1h-1zM634 61h1v1h-1zM634 69h1v1h-1zM635 60h1v1h-1zM635 61h1v1h-1zM635 69h1v1h-1zM636 60h1v1h-1zM636 61h1v1h-1zM636 62h1v1h-1zM636 63h1v1h-1zM636 64h1v1h-1zM636 65h1v1h-1zM636 69h1v1h-1zM637 60h1v1h-1zM637 61h1v1h-1zM637 62h1v1h-1zM637 63h1v1h-1zM637 64h1v1h-1zM637 65h1v1h-1zM637 67h1v1h-1zM637 69h1v1h-1zM637 71h1v1h-1zM638 64h1v1h-1zM638 65h1v1h-1zM638 68h1v1h-1zM638 69h1v1h-1zM638 70h1v1h-1zM639 64h1v1h-1zM639 65h1v1h-1zM639 69h1v1h-1zM640 64h1v1h-1zM640 65h1v1h-1zM641 58h1v1h-1zM641 59h1v1h-1zM641 61h1v1h-1zM641 62h1v1h-1zM641 64h1v1h-1zM641 65h1v1h-1zM641 67h1v1h-1zM641 68h1v1h-1zM641 70h1v1h-1zM641 71h1v1h-1zM642 58h1v1h-1zM642 59h1v1h-1zM642 61h1v1h-1zM642 62h1v1h-1zM642 64h1v1h-1zM642 65h1v1h-1zM642 67h1v1h-1zM642 68h1v1h-1zM642 70h1v1h-1zM642 71h1v1h-1z" fill="#fff" transform="translate(1 1)"/><path d="M628 64h1v1h-1zM628 65h1v1h-1zM629 64h1v1h-1zM629 65h1v1h-1zM630 64h1v1h-1zM630 65h1v1h-1zM631 60h1v1h-1zM631 61h1v1h-1zM631 62h1v1h-1zM631 63h1v1h-1zM631 64h1v1h-1zM631 65h1v1h-1zM631 69h1v1h-1zM632 60h1v1h-1zM632 61h1v1h-1zM632 62h1v1h-1zM632 63h1v1h-1zM632 64h1v1h-1zM632 65h1v1h-1zM632 69h1v1h-1zM633 60h1v1h-1zM633 61h1v1h-1zM633 69h1v1h-1zM634 60h1v1h-1zM634 61h1v1h-1zM634 69h1v1h-1zM635 60h1v1h-1zM635 61h1v1h-1zM635 69h1v1h-1zM636 60h1v1h-1zM636 61h1v1h-1zM636 62h1v1h-1zM636 63h1v1h-1zM636 64h1v1h-1zM636 65h1v1h-1zM636 69h1v1h-1zM637 60h1v1h-1zM637 61h1v1h-1zM637 62h1v1h-1zM637 63h1v1h-1zM637 64h1v1h-1zM637 65h1v1h-1zM637 67h1v1h-1zM637 69h1v1h-1zM637 71h1v1h-1zM638 64h1v1h-1zM638 65h1v1h-1zM638 68h1v1h-1zM638 69h1v1h-1zM638 70h1v1h-1zM639 64h1v1h-1zM639 65h1v1h-1zM639 69h1v1h-1zM640 64h1v1h-1zM640 65h1v1h-1zM641 58h1v1h-1zM641 59h1v1h-1zM641 61h1v1h-1zM641 62h1v1h-1zM641 64h1v1h-1zM641 65h1v1h-1zM641 67h1v1h-1zM641 68h1v1h-1zM641 70h1v1h-1zM641 71h1v1h-1zM642 58h1v1h-1zM642 59h1v1h-1zM642 61h1v1h-1zM642 62h1v1h-1zM642 64h1v1h-1zM642 65h1v1h-1zM642 67h1v1h-1zM642 68h1v1h-1zM642 70h1v1h-1zM642 71h1v1h-1z" fill="#aca899"/>
<path d="M653 58h1v1h-1zM653 59h1v1h-1zM653 61h1v1h-1zM653 62h1v1h-1zM653 64h1v1h-1zM653 65h1v1h-1zM653 67h1v1h-1zM653 68h1v1h-1zM653 70h1v1h-1zM653 71h1v1h-1zM654 58h1v1h-1zM654 59h1v1h-1zM654 61h1v1h-1zM654 62h1v1h-1zM654 64h1v1h-1zM654 65h1v1h-1zM654 67h1v1h-1zM654 68h1v1h-1zM654 70h1v1h-1zM654 71h1v1h-1zM656 60h1v1h-1zM656 61h1v1h-1zM656 69h1v1h-1zM657 60h1v1h-1zM657 61h1v1h-1zM657 68h1v1h-1zM657 69h1v1h-1zM657 70h1v1h-1zM658 60h1v1h-1zM658 61h1v1h-1zM658 67h1v1h-1zM658 69h1v1h-1zM658 71h1v1h-1zM659 60h1v1h-1zM659 61h1v1h-1zM659 62h1v1h-1zM659 63h1v1h-1zM659 64h1v1h-1zM659 65h1v1h-1zM659 69h1v1h-1zM660 60h1v1h-1zM660 61h1v1h-1zM660 62h1v1h-1zM660 63h1v1h-1zM660 64h1v1h-1zM660 65h1v1h-1zM660 69h1v1h-1zM661 64h1v1h-1zM661 65h1v1h-1zM661 69h1v1h-1zM662 64h1v1h-1zM662 65h1v1h-1zM662 69h1v1h-1zM663 64h1v1h-1zM663 65h1v1h-1zM663 69h1v1h-1zM664 60h1v1h-1zM664 61h1v1h-1zM664 62h1v1h-1zM664 63h1v1h-1zM664 64h1v1h-1zM664 65h1v1h-1zM664 69h1v1h-1zM665 60h1v1h-1zM665 61h1v1h-1zM665 62h1v1h-1zM665 63h1v1h-1zM665 64h1v1h-1zM665 65h1v1h-1zM666 60h1v1h-1zM666 61h1v1h-1zM667 60h1v1h-1zM667 61h1v1h-1zM668 60h1v1h-1zM668 61h1v1h-1z" fill="#fff" transform="translate(1 1)"/><path d="M653 58h1v1h-1zM653 59h1v1h-1zM653 61h1v1h-1zM653 62h1v1h-1zM653 64h1v1h-1zM653 65h1v1h-1zM653 67h1v1h-1zM653 68h1v1h-1zM653 70h1v1h-1zM653 71h1v1h-1zM654 58h1v1h-1zM654 59h1v1h-1zM654 61h1v1h-1zM654 62h1v1h-1zM654 64h1v1h-1zM654 65h1v1h-1zM654 67h1v1h-1zM654 68h1v1h-1zM654 70h1v1h-1zM654 71h1v1h-1zM656 60h1v1h-1zM656 61h1v1h-1zM656 69h1v1h-1zM657 60h1v1h-1zM657 61h1v1h-1zM657 68h1v1h-1zM657 69h1v1h-1zM657 70h1v1h-1zM658 60h1v1h-1zM658 61h1v1h-1zM658 67h1v1h-1zM658 69h1v1h-1zM658 71h1v1h-1zM659 60h1v1h-1zM659 61h1v1h-1zM659 62h1v1h-1zM659 63h1v1h-1zM659 64h1v1h-1zM659 65h1v1h-1zM659 69h1v1h-1zM660 60h1v1h-1zM660 61h1v1h-1zM660 62h1v1h-1zM660 63h1v1h-1zM660 64h1v1h-1zM660 65h1v1h-1zM660 69h1v1h-1zM661 64h1v1h-1zM661 65h1v1h-1zM661 69h1v1h-1zM662 64h1v1h-1zM662 65h1v1h-1zM662 69h1v1h-1zM663 64h1v1h-1zM663 65h1v1h-1zM663 69h1v1h-1zM664 60h1v1h-1zM664 61h1v1h-1zM664 62h1v1h-1zM664 63h1v1h-1zM664 64h1v1h-1zM664 65h1v1h-1zM664 69h1v1h-1zM665 60h1v1h-1zM665 61h1v1h-1zM665 62h1v1h-1zM665 63h1v1h-1zM665 64h1v1h-1zM665 65h1v1h-1zM666 60h1v1h-1zM666 61h1v1h-1zM667 60h1v1h-1zM667 61h1v1h-1zM668 60h1v1h-1zM668 61h1v1h-1z" fill="#aca899"/>
<path d="M682 72h1v1h-1zM683 71h1v1h-1zM684 70h1v1h-1zM685 69h1v1h-1zM686 68h1v1h-1zM686 68h1v1h-1zM687 68h1v1h-1zM688 68h1v1h-1zM688 68h1v1h-1zM689 67h1v1h-1zM690 66h1v1h-1zM691 65h1v1h-1zM692 64h1v1h-1zM683 72h1v1h-1zM684 71h1v1h-1zM685 70h1v1h-1zM686 69h1v1h-1zM687 68h1v1h-1zM689 69h1v1h-1zM690 70h1v1h-1zM691 71h1v1h-1zM691 71h1v1h-1zM692 71h1v1h-1zM693 71h1v1h-1zM694 71h1v1h-1zM694 71h1v1h-1zM695 72h1v1h-1zM695 72h1v1h-1zM696 72h1v1h-1zM697 72h1v1h-1z" fill="#fff" transform="translate(1 1)"/><path d="M682 72h1v1h-1zM683 71h1v1h-1zM684 70h1v1h-1zM685 69h1v1h-1zM686 68h1v1h-1zM686 68h1v1h-1zM687 68h1v1h-1zM688 68h1v1h-1zM688 68h1v1h-1zM689 67h1v1h-1zM690 66h1v1h-1zM691 65h1v1h-1zM692 64h1v1h-1zM683 72h1v1h-1zM684 71h1v1h-1zM685 70h1v1h-1zM686 69h1v1h-1zM687 68h1v1h-1zM689 69h1v1h-1zM690 70h1v1h-1zM691 71h1v1h-1zM691 71h1v1h-1zM692 71h1v1h-1zM693 71h1v1h-1zM694 71h1v1h-1zM694 71h1v1h-1zM695 72h1v1h-1zM695 72h1v1h-1zM696 72h1v1h-1zM697 72h1v1h-1z" fill="#aca899"/>
<path d="M705 59h1v1h-1zM706 60h1v1h-1zM706 61h1v1h-1zM707 61h1v1h-1zM707 62h1v1h-1zM708 64h1v1h-1zM708 65h1v1h-1zM709 65h1v1h-1zM709 66h1v1h-1zM709 67h1v1h-1zM710 67h1v1h-1zM710 68h1v1h-1zM708 66h1v1h-1zM712 68h1v1h-1zM713 68h1v1h-1zM712 69h1v1h-1zM713 69h1v1h-1zM716 66h1v1h-1zM716 67h1v1h-1zM716 68h1v1h-1zM715 67h1v1h-1zM717 67h1v1h-1zM719 64h1v1h-1zM720 64h1v1h-1zM719 65h1v1h-1zM720 65h1v1h-1z" fill="#ff0000"/><path d="M8 8H9V9H8zM21 8H22V9H21zM8 17H9V18H8zM21 17H22V18H21z" fill="#303030"/><path d="M9 8H21V9H9zM8 9H9V10H8zM11 9H12V10H11zM14 9H15V10H14zM17 9H18V10H17zM20 9H22V10H20zM8 10H9V11H8zM11 10H12V11H11zM14 10H15V11H14zM20 10H22V11H20zM8 11H9V12H8zM11 11H12V12H11zM14 11H15V12H14zM17 11H18V12H17zM20 11H22V12H20zM8 12H14V13H8zM15 12H20V13H15zM21 12H22V13H21zM8 13H9V14H8zM11 13H12V14H11zM17 13H18V14H17zM20 13H22V14H20zM8 14H9V15H8zM11 14H12V15H11zM17 14H18V15H17zM20 14H22V15H20zM8 15H9V16H8zM13 15H20V16H13zM21 15H22V16H21zM8 16H9V17H8zM11 16H12V17H11zM14 16H15V17H14zM17 16H18V17H17zM20 16H22V17H20zM9 17H14V18H9zM16 17H21V18H16z" fill="#8c8c8c"/><path d="M9 9H11V10H9zM12 9H14V10H12zM15 9H17V10H15zM18 9H20V10H18zM6 10H8V11H6zM9 10H11V11H9zM12 10H14V11H12zM15 10H16V11H15zM18 10H20V11H18zM9 11H11V12H9zM12 11H14V12H12zM16 11H17V12H16zM9 13H11V14H9zM12 13H13V14H12zM15 13H17V14H15zM18 13H20V14H18zM9 14H11V15H9zM14 14H17V15H14zM18 14H20V15H18zM9 16H11V17H9zM12 16H14V17H12zM15 16H17V17H15zM18 16H20V17H18zM17 18H22V19H17zM6 19H7V20H6zM9 19H10V20H9zM11 19H12V20H11zM13 19H14V20H13zM16 19H17V20H16zM20 19H21V20H20zM20 20H21V21H20zM8 21H9V22H8zM10 21H11V22H10zM12 21H13V22H12zM20 21H21V22H20zM20 22H21V23H20zM6 23H21V24H6z" fill="#000"/><path d="M16 10H18V11H16zM15 11H16V12H15zM18 11H20V12H18zM14 12H15V13H14zM13 13H15V14H13zM12 14H14V15H12zM9 15H13V16H9z" fill="#00c020"/><path d="M6 11H7V12H6zM6 12H7V13H6zM6 13H7V14H6zM6 14H7V15H6zM6 15H7V16H6zM6 16H7V17H6zM6 17H7V18H6zM6 18H7V19H6zM6 20H7V21H6zM6 21H7V22H6zM6 22H7V23H6z" fill="#e8e000"/><path d="M7 11H8V12H7zM7 12H8V13H7zM7 13H8V14H7zM7 14H8V15H7zM7 15H8V16H7zM7 16H8V17H7zM7 17H8V18H7zM7 18H15V19H7zM14 19H16V20H14zM17 19H20V20H17zM7 20H20V21H7zM7 21H8V22H7zM13 21H20V22H13zM7 22H20V23H7z" fill="#f4f070"/><path d="M20 12H21V13H20zM20 15H21V16H20z" fill="#a0a0a0"/><path d="M14 17H16V18H14zM15 18H17V19H15z" fill="#fff"/><path d="M7 19H9V20H7zM10 19H11V20H10zM12 19H13V20H12zM9 21H10V22H9zM11 21H12V22H11z" fill="#a0a000"/>
<path d="M8 31H24V32H8zM8 32H9V33H8zM23 32H24V33H23zM8 33H9V34H8zM23 33H24V34H23zM8 34H9V35H8zM23 34H24V35H23zM8 35H9V36H8zM23 35H24V36H23zM8 36H9V37H8zM23 36H24V37H23zM8 37H9V38H8zM23 37H24V38H23zM8 38H9V39H8zM23 38H24V39H23zM8 39H9V40H8zM23 39H24V40H23zM8 40H9V41H8zM23 40H24V41H23zM8 41H9V42H8zM23 41H24V42H23zM8 42H9V43H8zM23 42H24V43H23zM8 43H9V44H8zM23 43H24V44H23zM8 44H9V45H8zM23 44H24V45H23zM8 45H9V46H8zM23 45H24V46H23zM8 46H24V47H8zM8 47H24V48H8z" fill="#3a3a3a"/><path d="M9 32H23V33H9zM9 33H12V34H9zM13 33H18V34H13zM19 33H23V34H19zM9 34H23V35H9zM10 35H11V36H10zM12 35H15V36H12zM17 35H19V36H17zM20 35H21V36H20zM22 35H23V36H22zM9 36H14V37H9zM18 36H23V37H18zM9 37H14V38H9zM15 37H17V38H15zM18 37H23V38H18zM9 38H13V39H9zM15 38H17V39H15zM18 38H23V39H18zM14 39H17V40H14zM18 39H23V40H18zM13 40H17V41H13zM20 40H23V41H20zM10 41H11V42H10zM12 41H13V42H12zM14 41H18V42H14zM21 41H22V42H21zM9 42H20V43H9zM9 43H12V44H9zM13 43H18V44H13zM19 43H21V44H19zM22 43H23V44H22zM9 44H23V45H9zM9 45H23V46H9z" fill="#c8c8c8"/><path d="M12 33H13V34H12zM18 33H19V34H18zM9 35H10V36H9zM11 35H12V36H11zM19 35H20V36H19zM21 35H22V36H21zM9 41H10V42H9zM11 41H12V42H11zM13 41H14V42H13zM12 43H13V44H12zM18 43H19V44H18z" fill="#b4b4b4"/><path d="M15 35H17V36H15zM14 36H16V37H14zM17 36H18V37H17zM17 37H18V38H17zM13 38H15V39H13zM13 39H14V40H13zM9 40H13V41H9zM17 40H18V41H17zM19 40H20V41H19zM18 41H20V42H18zM22 41H23V42H22zM20 42H21V43H20zM21 43H22V44H21z" fill="#e86060"/><path d="M16 36H17V37H16zM14 37H15V38H14zM17 38H18V39H17zM9 39H13V40H9zM17 39H18V40H17zM18 40H19V41H18zM20 41H21V42H20zM21 42H23V43H21z" fill="#f03030"/></svg>
<svg width="768" height="527" viewBox="0 0 768 527" shape-rendering="crispEdges">
<g stroke="#000" stroke-width="1" fill="none">
<path d="M62 90.5H755M62 450.5H755" stroke-dasharray="5 3"/>
<path d="M62.5 451V90M754.5 451V90" stroke-dasharray="5 3"/>
<path d="M58 90.5H62M58 210.5H62M58 330.5H62M58 450.5H62M62.5 451V455M235.5 451V455M408.5 451V455M581.5 451V455M754.5 451V455"/>
</g>
<path d="M235 120h1v1h-1zM235 150h1v1h-1zM235 180h1v1h-1zM235 210h1v1h-1zM235 240h1v1h-1zM235 270h1v1h-1zM235 300h1v1h-1zM235 330h1v1h-1zM235 360h1v1h-1zM235 390h1v1h-1zM235 420h1v1h-1zM408 120h1v1h-1zM408 150h1v1h-1zM408 180h1v1h-1zM408 210h1v1h-1zM408 240h1v1h-1zM408 270h1v1h-1zM408 300h1v1h-1zM408 330h1v1h-1zM408 360h1v1h-1zM408 390h1v1h-1zM408 420h1v1h-1zM581 120h1v1h-1zM581 150h1v1h-1zM581 180h1v1h-1zM581 210h1v1h-1zM581 240h1v1h-1zM581 270h1v1h-1zM581 300h1v1h-1zM581 330h1v1h-1zM581 360h1v1h-1zM581 390h1v1h-1zM581 420h1v1h-1zM114 210h1v1h-1zM145 210h1v1h-1zM166 210h1v1h-1zM183 210h1v1h-1zM197 210h1v1h-1zM208 210h1v1h-1zM218 210h1v1h-1zM227 210h1v1h-1zM287 210h1v1h-1zM318 210h1v1h-1zM339 210h1v1h-1zM356 210h1v1h-1zM370 210h1v1h-1zM381 210h1v1h-1zM391 210h1v1h-1zM400 210h1v1h-1zM460 210h1v1h-1zM491 210h1v1h-1zM512 210h1v1h-1zM529 210h1v1h-1zM543 210h1v1h-1zM554 210h1v1h-1zM564 210h1v1h-1zM573 210h1v1h-1zM633 210h1v1h-1zM664 210h1v1h-1zM685 210h1v1h-1zM702 210h1v1h-1zM716 210h1v1h-1zM727 210h1v1h-1zM737 210h1v1h-1zM746 210h1v1h-1zM114 330h1v1h-1zM145 330h1v1h-1zM166 330h1v1h-1zM183 330h1v1h-1zM197 330h1v1h-1zM208 330h1v1h-1zM218 330h1v1h-1zM227 330h1v1h-1zM287 330h1v1h-1zM318 330h1v1h-1zM339 330h1v1h-1zM356 330h1v1h-1zM370 330h1v1h-1zM381 330h1v1h-1zM391 330h1v1h-1zM400 330h1v1h-1zM460 330h1v1h-1zM491 330h1v1h-1zM512 330h1v1h-1zM529 330h1v1h-1zM543 330h1v1h-1zM554 330h1v1h-1zM564 330h1v1h-1zM573 330h1v1h-1zM633 330h1v1h-1zM664 330h1v1h-1zM685 330h1v1h-1zM702 330h1v1h-1zM716 330h1v1h-1zM727 330h1v1h-1zM737 330h1v1h-1zM746 330h1v1h-1zM32 330h7v1h-7zM32 450h7v1h-7z" fill="#000"/>
<path d="M178 369h1v1h-1zM201 353h1v1h-1zM214 344h1v1h-1zM224 337h1v1h-1zM234 330h1v1h-1zM244 323h1v1h-1zM247 321h1v1h-1zM254 316h1v1h-1zM257 314h1v1h-1zM264 309h1v1h-1zM267 307h1v1h-1zM271 304h1v1h-1zM274 302h1v1h-1zM277 300h1v1h-1zM278 299h1v1h-1zM281 297h1v1h-1zM284 295h1v1h-1zM285 294h1v1h-1zM288 292h1v1h-1zM291 290h1v1h-1zM292 289h1v1h-1zM294 288h1v1h-1zM295 287h1v1h-1zM298 285h1v1h-1zM299 284h1v1h-1zM301 283h1v1h-1zM302 282h1v1h-1zM303 281h1v1h-1zM305 280h1v1h-1zM306 279h1v1h-1zM307 278h2v1h-2zM309 277h1v1h-1zM310 276h1v1h-1zM312 275h1v1h-1zM313 274h1v1h-1zM314 273h2v1h-2zM316 272h1v1h-1zM317 271h1v1h-1zM318 270h2v1h-2zM320 269h1v1h-1zM321 268h1v1h-1zM322 267h2v1h-2zM324 266h1v1h-1zM325 265h1v1h-1zM326 264h1v1h-1zM327 263h2v1h-2zM329 262h1v1h-1zM330 261h1v1h-1zM331 260h2v1h-2zM333 259h1v1h-1zM334 258h1v1h-1zM335 257h1v1h-1zM336 256h2v1h-2zM338 255h1v1h-1zM339 254h1v1h-1zM340 253h1v1h-1zM341 252h2v1h-2zM343 251h1v1h-1zM344 250h1v1h-1zM345 249h1v1h-1zM346 248h2v1h-2zM348 247h1v1h-1zM349 246h1v1h-1zM350 245h1v1h-1zM351 244h1v1h-1zM352 243h2v1h-2zM354 242h1v1h-1zM355 241h1v1h-1zM356 240h1v1h-1zM357 239h1v1h-1zM358 238h1v1h-1zM359 237h1v1h-1zM360 236h2v1h-2zM362 235h1v1h-1zM363 234h1v1h-1zM364 233h1v1h-1zM365 232h1v1h-1zM366 231h1v1h-1zM367 230h1v1h-1zM368 229h1v1h-1zM369 228h1v1h-1zM370 227h1v1h-1zM371 226h1v1h-1zM372 225h1v1h-1zM373 224h1v1h-1zM374 223h1v1h-1zM375 222h1v1h-1zM376 221h1v1h-1zM377 220h1v1h-1zM378 219h1v1h-1zM379 218h1v1h-1zM380 217h1v1h-1zM381 216h1v1h-1zM382 215h1v1h-1zM383 214h1v1h-1zM384 213h1v1h-1zM385 212h1v1h-1zM386 211h1v1h-1zM387 210h1v1h-1zM388 209h1v1h-1zM389 208h1v1h-1zM390 207h1v1h-1zM391 206h1v1h-1zM392 205h1v1h-1zM393 204h1v1h-1zM394 203h1v1h-1zM395 202h1v1h-1zM396 201h1v1h-1zM397 200h1v1h-1zM398 199h1v1h-1zM399 198h1v1h-1zM400 197h1v1h-1zM401 196h1v1h-1zM402 195h2v1h-2zM404 194h1v1h-1zM405 193h2v1h-2zM407 192h14v1h-14zM421 193h3v1h-3zM424 194h3v1h-3zM427 195h3v1h-3zM430 196h2v1h-2zM432 197h3v1h-3zM435 198h3v1h-3zM438 199h4v1h-4zM442 200h3v1h-3zM445 201h4v1h-4zM449 202h4v1h-4zM453 203h5v1h-5zM458 204h6v1h-6zM464 205h8v1h-8zM472 206h9v1h-9zM481 207h12v1h-12zM493 208h18v1h-18zM525 209h27v1h-27z" fill="#ff4040"/>
<path d="M178 369h1v1h-1zM214 344h1v1h-1zM224 337h1v1h-1zM247 321h1v1h-1zM257 314h1v1h-1zM264 309h1v1h-1zM267 307h1v1h-1zM274 302h1v1h-1zM277 300h1v1h-1zM281 297h1v1h-1zM284 295h1v1h-1zM291 290h1v1h-1zM294 288h1v1h-1zM295 287h1v1h-1zM298 285h1v1h-1zM301 283h1v1h-1zM302 282h1v1h-1zM305 280h1v1h-1zM308 278h1v1h-1zM309 277h1v1h-1zM312 275h1v1h-1zM313 274h1v1h-1zM315 273h1v1h-1zM316 272h1v1h-1zM319 270h1v1h-1zM320 269h1v1h-1zM322 268h1v1h-1zM323 267h1v1h-1zM324 266h1v1h-1zM326 265h1v1h-1zM327 264h1v1h-1zM328 263h2v1h-2zM330 262h1v1h-1zM331 261h1v1h-1zM332 260h2v1h-2zM334 259h1v1h-1zM335 258h1v1h-1zM336 257h2v1h-2zM338 256h1v1h-1zM339 255h1v1h-1zM340 254h2v1h-2zM342 253h1v1h-1zM343 252h1v1h-1zM344 251h1v1h-1zM345 250h2v1h-2zM347 249h1v1h-1zM348 248h1v1h-1zM349 247h1v1h-1zM350 246h2v1h-2zM352 245h1v1h-1zM353 244h1v1h-1zM354 243h2v1h-2zM356 242h1v1h-1zM357 241h1v1h-1zM358 240h1v1h-1zM359 239h2v1h-2zM361 238h1v1h-1zM362 237h1v1h-1zM363 236h1v1h-1zM364 235h1v1h-1zM365 234h2v1h-2zM367 233h1v1h-1zM368 232h1v1h-1zM369 231h1v1h-1zM370 230h2v1h-2zM372 229h1v1h-1zM373 228h1v1h-1zM374 227h1v1h-1zM375 226h1v1h-1zM376 225h2v1h-2zM378 224h1v1h-1zM379 223h1v1h-1zM380 222h1v1h-1zM381 221h1v1h-1zM382 220h2v1h-2zM384 219h1v1h-1zM385 218h1v1h-1zM386 217h1v1h-1zM387 216h2v1h-2zM389 215h1v1h-1zM390 214h1v1h-1zM391 213h2v1h-2zM393 212h1v1h-1zM394 211h2v1h-2zM396 210h1v1h-1zM397 209h2v1h-2zM399 208h1v1h-1zM400 207h2v1h-2zM402 206h2v1h-2zM404 205h3v1h-3zM407 204h2v1h-2zM409 203h4v1h-4zM413 202h22v1h-22zM435 203h8v1h-8zM443 204h7v1h-7zM450 205h9v1h-9zM459 206h10v1h-10zM469 207h13v1h-13zM482 208h20v1h-20zM525 209h18v1h-18z" fill="#4000ff"/>
<path d="M62 450h1v1h-1zM63 449h2v1h-2zM65 448h1v1h-1zM66 447h2v1h-2zM68 446h1v1h-1zM69 445h1v1h-1zM70 444h2v1h-2zM72 443h1v1h-1zM73 442h2v1h-2zM75 441h1v1h-1zM76 440h2v1h-2zM78 439h1v1h-1zM79 438h2v1h-2zM81 437h1v1h-1zM82 436h1v1h-1zM83 435h2v1h-2zM85 434h1v1h-1zM86 433h2v1h-2zM88 432h1v1h-1zM89 431h2v1h-2zM91 430h1v1h-1zM92 429h1v1h-1zM93 428h2v1h-2zM95 427h1v1h-1zM96 426h2v1h-2zM98 425h1v1h-1zM99 424h2v1h-2zM101 423h1v1h-1zM102 422h2v1h-2zM104 421h1v1h-1zM105 420h1v1h-1zM106 419h2v1h-2zM108 418h1v1h-1zM109 417h2v1h-2zM111 416h1v1h-1zM112 415h2v1h-2zM114 414h1v1h-1zM115 413h2v1h-2zM117 412h1v1h-1zM118 411h1v1h-1zM119 410h2v1h-2zM121 409h1v1h-1zM122 408h2v1h-2zM124 407h1v1h-1zM125 406h2v1h-2zM127 405h1v1h-1zM128 404h2v1h-2zM130 403h1v1h-1zM131 402h1v1h-1zM132 401h2v1h-2zM134 400h1v1h-1zM135 399h2v1h-2zM137 398h1v1h-1zM138 397h2v1h-2zM140 396h1v1h-1zM141 395h1v1h-1zM142 394h2v1h-2zM144 393h1v1h-1zM145 392h2v1h-2zM147 391h1v1h-1zM148 390h2v1h-2zM150 389h1v1h-1zM151 388h2v1h-2zM153 387h1v1h-1zM154 386h1v1h-1zM155 385h2v1h-2zM157 384h1v1h-1zM158 383h2v1h-2zM160 382h1v1h-1zM161 381h2v1h-2zM163 380h1v1h-1zM164 379h2v1h-2zM166 378h1v1h-1zM167 377h1v1h-1zM168 376h2v1h-2zM170 375h1v1h-1zM171 374h2v1h-2zM173 373h1v1h-1zM174 372h2v1h-2zM176 371h1v1h-1zM177 370h2v1h-2zM179 369h1v1h-1zM180 368h1v1h-1zM181 367h2v1h-2zM183 366h1v1h-1zM184 365h2v1h-2zM186 364h1v1h-1zM187 363h2v1h-2zM189 362h1v1h-1zM190 361h1v1h-1zM191 360h2v1h-2zM193 359h1v1h-1zM194 358h2v1h-2zM196 357h1v1h-1zM197 356h2v1h-2zM199 355h1v1h-1zM200 354h2v1h-2zM202 353h1v1h-1zM203 352h1v1h-1zM204 351h2v1h-2zM206 350h1v1h-1zM207 349h2v1h-2zM209 348h1v1h-1zM210 347h2v1h-2zM212 346h1v1h-1zM213 345h2v1h-2zM215 344h1v1h-1zM216 343h1v1h-1zM217 342h2v1h-2zM219 341h1v1h-1zM220 340h2v1h-2zM222 339h1v1h-1zM223 338h2v1h-2zM225 337h1v1h-1zM226 336h1v1h-1zM227 335h2v1h-2zM229 334h1v1h-1zM230 333h2v1h-2zM232 332h1v1h-1zM233 331h2v1h-2zM235 330h1v1h-1zM236 329h1v1h-1zM237 328h2v1h-2zM239 327h1v1h-1zM240 326h2v1h-2zM242 325h1v1h-1zM243 324h2v1h-2zM245 323h1v1h-1zM246 322h2v1h-2zM248 321h1v1h-1zM249 320h1v1h-1zM250 319h2v1h-2zM252 318h1v1h-1zM253 317h2v1h-2zM255 316h1v1h-1zM256 315h2v1h-2zM258 314h1v1h-1zM259 313h1v1h-1zM260 312h2v1h-2zM262 311h1v1h-1zM263 310h2v1h-2zM265 309h1v1h-1zM266 308h2v1h-2zM268 307h1v1h-1zM269 306h1v1h-1zM270 305h2v1h-2zM272 304h1v1h-1zM273 303h2v1h-2zM275 302h1v1h-1zM276 301h2v1h-2zM278 300h1v1h-1zM279 299h1v1h-1zM280 298h2v1h-2zM282 297h1v1h-1zM283 296h2v1h-2zM285 295h1v1h-1zM286 294h1v1h-1zM287 293h2v1h-2zM289 292h1v1h-1zM290 291h2v1h-2zM292 290h1v1h-1zM293 289h2v1h-2zM295 288h1v1h-1zM296 287h1v1h-1zM297 286h2v1h-2zM299 285h1v1h-1zM300 284h2v1h-2zM302 283h1v1h-1zM303 282h1v1h-1zM304 281h2v1h-2zM306 280h1v1h-1zM307 279h2v1h-2zM309 278h1v1h-1zM310 277h1v1h-1zM311 276h2v1h-2zM313 275h1v1h-1zM314 274h2v1h-2zM316 273h1v1h-1zM317 272h1v1h-1zM318 271h2v1h-2zM320 270h1v1h-1zM321 269h2v1h-2zM323 268h1v1h-1zM324 267h1v1h-1zM325 266h2v1h-2zM327 265h1v1h-1zM328 264h2v1h-2zM330 263h1v1h-1zM331 262h1v1h-1zM332 261h2v1h-2zM334 260h1v1h-1zM335 259h1v1h-1zM336 258h2v1h-2zM338 257h1v1h-1zM339 256h2v1h-2zM341 255h1v1h-1zM342 254h1v1h-1zM343 253h2v1h-2zM345 252h1v1h-1zM346 251h1v1h-1zM347 250h2v1h-2zM349 249h1v1h-1zM350 248h1v1h-1zM351 247h2v1h-2zM353 246h1v1h-1zM354 245h2v1h-2zM356 244h1v1h-1zM357 243h1v1h-1zM358 242h2v1h-2zM360 241h1v1h-1zM361 240h1v1h-1zM362 239h2v1h-2zM364 238h1v1h-1zM365 237h1v1h-1zM366 236h2v1h-2zM368 235h1v1h-1zM369 234h2v1h-2zM371 233h1v1h-1zM372 232h1v1h-1zM373 231h2v1h-2zM375 230h1v1h-1zM376 229h2v1h-2zM378 228h1v1h-1zM379 227h2v1h-2zM381 226h1v1h-1zM382 225h2v1h-2zM384 224h1v1h-1zM385 223h2v1h-2zM387 222h1v1h-1zM388 221h2v1h-2zM390 220h1v1h-1zM391 219h2v1h-2zM393 218h2v1h-2zM395 217h2v1h-2zM397 216h2v1h-2zM399 215h2v1h-2zM401 214h2v1h-2zM403 213h2v1h-2zM405 212h3v1h-3zM408 211h3v1h-3zM411 210h4v1h-4zM415 209h4v1h-4zM419 208h9v1h-9zM428 207h27v1h-27zM455 208h26v1h-26zM481 209h44v1h-44zM525 210h230v1h-230z" fill="#40ff40"/>
<rect x="65.5" y="479.5" width="4" height="4" fill="none" stroke="#ff4040"/>
<path d="M83.5 479.5L85.5 481.5L83.5 483.5L81.5 481.5Z" fill="none" stroke="#4000ff"/>
<path d="M96 479.5H103M97.5 480.5L99.5 483.5L101.5 480.5" fill="none" stroke="#40ff40"/>
</svg>
<svg width="768" height="527" viewBox="0 0 768 527"><defs><filter id="th" x="0" y="0" width="100%" height="100%" filterUnits="userSpaceOnUse" color-interpolation-filters="sRGB"><feComponentTransfer><feFuncA type="discrete" tableValues="0 0 1 1"/></feComponentTransfer></filter><filter id="th2" x="0" y="0" width="100%" height="100%" filterUnits="userSpaceOnUse" color-interpolation-filters="sRGB"><feComponentTransfer><feFuncA type="discrete" tableValues="0 0 0 1 1 1 1 1 1 1"/></feComponentTransfer></filter><filter id="th3" x="0" y="0" width="100%" height="100%" filterUnits="userSpaceOnUse" color-interpolation-filters="sRGB"><feComponentTransfer><feFuncA type="table" tableValues="0 0.15 0.75 1 1 1"/></feComponentTransfer></filter><filter id="ts" x="0" y="0" width="100%" height="100%" filterUnits="userSpaceOnUse" color-interpolation-filters="sRGB"><feComponentTransfer in="SourceGraphic" result="t"><feFuncA type="discrete" tableValues="0 0 0 1 1 1 1 1 1 1"/></feComponentTransfer><feOffset in="t" dx="1" dy="1" result="o"/><feFlood flood-color="#4b5a23"/><feComposite in2="o" operator="in" result="sh"/><feMerge><feMergeNode in="sh"/><feMergeNode in="t"/></feMerge></filter><filter id="ws" x="0" y="0" width="100%" height="100%" filterUnits="userSpaceOnUse" color-interpolation-filters="sRGB"><feComponentTransfer in="SourceGraphic" result="t"><feFuncA type="discrete" tableValues="0 0 1 1"/></feComponentTransfer><feOffset in="t" dx="1" dy="1" result="o"/><feFlood flood-color="#ffffff"/><feComposite in2="o" operator="in" result="sh"/><feMerge><feMergeNode in="sh"/><feMergeNode in="t"/></feMerge></filter></defs><g filter="url(#th)">
<text class="t" x="56" y="95" text-anchor="end">40</text>
<text class="t" x="56" y="215" text-anchor="end">0</text>
<text class="t" x="56" y="335" text-anchor="end">-40</text>
<text class="t" x="56" y="455" text-anchor="end">-80</text>
<text class="t" x="63.5" y="470" text-anchor="middle">100Hz</text>
<text class="t" x="236.5" y="470" text-anchor="middle">1.0KHz</text>
<text class="t" x="409.5" y="470" text-anchor="middle">10KHz</text>
<text class="t" x="582.5" y="470" text-anchor="middle">100KHz</text>
<text class="t" x="755" y="470" text-anchor="end">1.0MHz</text>
<text class="t" x="408.5" y="500" text-anchor="middle">Frequency</text>
<text class="t" x="110" y="485" text-anchor="start">DB(V(3)/V(1))</text>
</g><g filter="url(#th2)">
</g><g filter="url(#ts)">
<text y="0" transform="translate(0 22) scale(1 1.1)" font-family="Liberation Sans, sans-serif" font-weight="bold" font-size="12.6" fill="#fff"><tspan x="26.5" textLength="55.0" lengthAdjust="spacingAndGlyphs">MicroSim</tspan> <tspan x="86.5" textLength="35.0" lengthAdjust="spacingAndGlyphs">Probe</tspan> <tspan x="127.0" textLength="4.0" lengthAdjust="spacingAndGlyphs">-</tspan> <tspan x="135.0" textLength="22.5" lengthAdjust="spacingAndGlyphs">[(B)</tspan> <tspan x="162.5" textLength="89.2" lengthAdjust="spacingAndGlyphs">ps09ex06.dat]</tspan></text>
</g><g filter="url(#th)">
<text class="it" font-size="13" fill="#000" stroke="#000" transform="scale(0.8 1)"><tspan x="361.62" y="67.6">F</tspan><tspan x="367.88" y="70.6">F</tspan><tspan x="374.50" y="72.6" font-size="12">T</tspan></text>
<text class="it" font-size="11.5"><tspan x="412.7" y="68" fill="#ff0000" stroke="#ff0000">A</tspan><tspan x="421.7" y="68" fill="#008000" stroke="#008000">B</tspan><tspan x="416.7" y="74" fill="#0000ff" stroke="#0000ff">C</tspan></text>
<text class="it" x="397.5" y="72.5" font-size="7.5" fill="#000" stroke="#000" font-style="italic" style="font-weight:normal;stroke-width:0.3px">f()</text>
</g><g filter="url(#ws)">
<text class="it" x="685" y="62.8" font-size="7" fill="#aca899" stroke="#aca899" style="font-weight:normal;stroke-width:0.2px">(0,1)</text>
</g></svg>
</body></html>
